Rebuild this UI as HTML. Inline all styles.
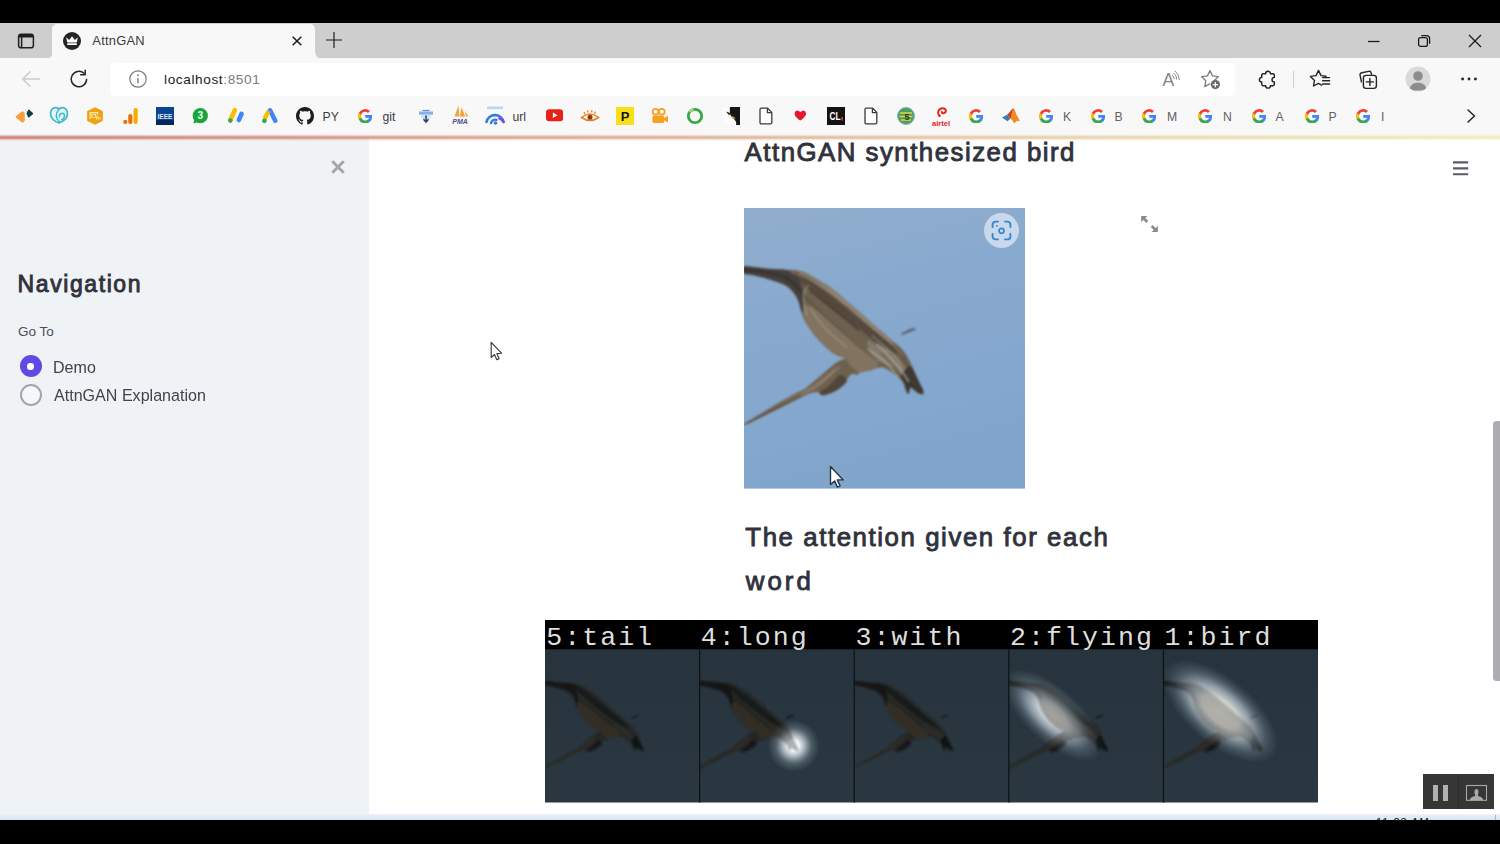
<!DOCTYPE html>
<html lang="en">
<head>
<meta charset="utf-8">
<title>AttnGAN</title>
<style>
*{box-sizing:border-box;margin:0;padding:0}
html,body{width:1500px;height:844px;overflow:hidden;background:#000;font-family:"Liberation Sans",sans-serif;}
#root{position:relative;width:1500px;height:844px;overflow:hidden;background:#000}
.abs{position:absolute}
#tabbar{left:0;top:23px;width:1500px;height:35px;background:#cecece}
#tab{left:52px;top:24.2px;width:263px;height:34px;background:#f8f8f8;border-radius:5px 5px 0 0}
.cnl{left:46.5px;top:52.5px;width:5.5px;height:5.5px;background:radial-gradient(circle at 0 0,#cecece 5px,#f8f8f8 5.8px)}
.cnr{left:315px;top:52.5px;width:5.5px;height:5.5px;background:radial-gradient(circle at 100% 0,#cecece 5px,#f8f8f8 5.8px)}
#toolbar{left:0;top:58px;width:1500px;height:79px;background:#f8f8f8}
#addr{left:110px;top:63px;width:1125px;height:33px;background:#fff;border-radius:5px}
#page{left:0;top:137px;width:1500px;height:683px;background:#fff;overflow:hidden}
#deco{left:-6px;top:135.8px;width:1512px;height:3.6px;background:linear-gradient(90deg,#c96a60 0%,#d58a76 25%,#dcab88 50%,#e6cf9e 75%,#ecebb2 100%);filter:blur(.8px)}
#sidebar{left:0;top:137px;width:369px;height:677px;background:#eff3f6}
#bottomstrip{left:0;top:813.6px;width:1500px;height:6.4px;background:linear-gradient(180deg,#edf3f9 0,#e2ebf6 40%,#d9e4f3 100%);overflow:hidden}
#blackbot{left:0;top:820px;width:1500px;height:24px;background:#000}
.t{position:absolute;white-space:nowrap;line-height:1}
.h{font-weight:normal;color:#30323d;-webkit-text-stroke:.9px #30323d;transform-origin:0 0}
.lbl{font-size:17.200px;color:#41434d;transform-origin:0 0}
.bm{font-size:12.2px;color:#626262;margin-top:1.5px}
</style>
</head>
<body>
<div id="root">
  <div class="abs" id="tabbar"></div>
  <div class="abs" id="tab"></div>
  <div class="abs cnl"></div><div class="abs cnr"></div>
  <div class="abs" id="toolbar"></div>
  <div class="abs" id="addr"></div>

  <!-- tab strip icons -->
  <svg class="abs" style="left:17px;top:32px" width="18" height="18" viewBox="0 0 18 18"><rect x="1.6" y="2.2" width="14.8" height="13.6" rx="2.6" fill="none" stroke="#1f1f1f" stroke-width="1.5"/><path d="M2 5.6V4.6a2.4 2.4 0 0 1 2.4-2.4h9.2A2.4 2.4 0 0 1 16 4.6v1z" fill="#1f1f1f"/><path d="M4.6 5v10.6" stroke="#1f1f1f" stroke-width="1.5"/></svg>
  <svg class="abs" style="left:63.4px;top:31.8px" width="18" height="18" viewBox="0 0 18 18"><circle cx="9" cy="9" r="9" fill="#242426"/><path d="M3.200 5.300l2.900 2.600L9 4.300l2.900 3.600 2.900-2.600-1 5.300H4.200z" fill="#fff"/><rect x="4.200" y="11.300" width="9.600" height="1.700" rx=".5" fill="#fff"/></svg>
  <div class="t" id="tabtitle" style="left:92.3px;top:34.6px;font-size:12.9px;letter-spacing:.25px;color:#3b3b3b">AttnGAN</div>
  <svg class="abs" style="left:291px;top:35px" width="12" height="12" viewBox="0 0 12 12"><path d="M1.7 1.7l8.600 8.600M10.300 1.700l-8.600 8.600" stroke="#1b1b1b" stroke-width="1.500" fill="none"/></svg>
  <svg class="abs" style="left:326.4px;top:32.1px" width="16" height="16" viewBox="0 0 16 16"><path d="M8 0v16M0 8h16" stroke="#1b1b1b" stroke-width="1.150" fill="none"/></svg>
  <svg class="abs" style="left:1366px;top:33px" width="16" height="16" viewBox="0 0 16 16"><path d="M2 8.500h11.500" stroke="#1b1b1b" stroke-width="1.300"/></svg>
  <svg class="abs" style="left:1416px;top:33px" width="16" height="16" viewBox="0 0 16 16"><rect x="2.600" y="4.600" width="8.800" height="8.800" rx="2" fill="none" stroke="#1b1b1b" stroke-width="1.300"/><path d="M5.200 2.600h5.600a2.800 2.800 0 0 1 2.800 2.800v5.400" fill="none" stroke="#1b1b1b" stroke-width="1.300"/></svg>
  <svg class="abs" style="left:1467px;top:33px" width="16" height="16" viewBox="0 0 16 16"><path d="M2 2l12 12M14 2L2 14" stroke="#1b1b1b" stroke-width="1.300" fill="none"/></svg>
  <!-- toolbar icons -->
  <svg class="abs" style="left:20px;top:69px" width="22" height="20" viewBox="0 0 22 20"><path d="M19.500 10H3M10 2.800L2.800 10l7.200 7.200" stroke="#cbcbcb" stroke-width="1.500" fill="none" stroke-linecap="round" stroke-linejoin="round"/></svg>
  <svg class="abs" style="left:69px;top:69px" width="20" height="20" viewBox="0 0 20 20"><path d="M17.600 10.400a7.700 7.700 0 1 1-2.600-6.100" stroke="#262626" stroke-width="1.500" fill="none" stroke-linecap="round"/><path d="M16.200 1.200v4.600h-4.600" stroke="#262626" stroke-width="1.500" fill="none" stroke-linecap="round" stroke-linejoin="round"/></svg>
  <svg class="abs" style="left:128px;top:69px" width="20" height="20" viewBox="0 0 20 20"><circle cx="10" cy="10" r="8.200" fill="none" stroke="#7a7a7a" stroke-width="1.200"/><path d="M10 9v5.200" stroke="#7a7a7a" stroke-width="1.400"/><circle cx="10" cy="6.300" r=".95" fill="#7a7a7a"/></svg>
  <div class="t" id="url" style="left:164px;top:73.3px;font-size:13.6px;letter-spacing:.62px;color:#202020">localhost<span style="color:#7b7b7b">:8501</span></div>

  <!-- right toolbar icons -->
  <div class="t" id="readA" style="left:1162.6px;top:71.7px;font-size:17.6px;color:#858585">A</div>
  <svg class="abs" style="left:1171px;top:70px" width="12" height="14" viewBox="0 0 12 14"><path d="M1.300 5.200q1.700 1.300 1.800 3.600M2.800 3.200q2.800 2.200 3 6M4.300 1.200q3.800 3 4.100 8.400" stroke="#8a8a8a" stroke-width="1" fill="none" stroke-linecap="round"/></svg>
  <svg class="abs" style="left:1199px;top:68px" width="24" height="24" viewBox="0 0 24 24"><path d="M11 2.600l2.500 5.300 5.700.8-4.100 4.100.4 1.400M11 2.600L8.400 7.900l-5.700.8 4.100 4.100-1 5.800 5-2.700" stroke="#7d7d7d" stroke-width="1.300" fill="none" stroke-linejoin="round" stroke-linecap="round"/><circle cx="16.400" cy="16.600" r="4.600" fill="#6a6a6a"/><path d="M16.400 14v5.200M13.800 16.600h5.200" stroke="#fff" stroke-width="1.200"/></svg>
  <svg class="abs" style="left:1256.7px;top:68.9px" width="21" height="21" viewBox="0 0 20 20"><path d="M6 4.500h2.200a2.300 2.300 0 0 1 4.600 0h2.200a1.500 1.500 0 0 1 1.500 1.500v2a2.200 2.200 0 0 0 0 4.400v2a1.500 1.500 0 0 1-1.500 1.500h-2.200a2.300 2.300 0 0 1-4.600 0H6a1.500 1.500 0 0 1-1.500-1.500v-2a2.200 2.200 0 0 1 0-4.400V6A1.500 1.500 0 0 1 6 4.500z" stroke="#232323" stroke-width="1.380" fill="none" stroke-linejoin="round"/></svg>
  <div class="abs" style="left:1292.500px;top:71px;width:1px;height:17px;background:#cecece"></div>
  <svg class="abs" style="left:1309px;top:68px" width="24" height="22" viewBox="0 0 24 22"><path d="M9.500 2.400l2.500 5.200 5 .7M9.500 2.400L7 7.600l-5.600.8 4.100 4-1 5.600 5-2.600 3.200 1.700" stroke="#262626" stroke-width="1.400" fill="none" stroke-linejoin="round" stroke-linecap="round"/><path d="M13.600 9.600h7M13.600 12.800h7M13.600 16h7" stroke="#262626" stroke-width="1.400" stroke-linecap="round"/></svg>
  <svg class="abs" style="left:1357px;top:68px" width="24" height="24" viewBox="0 0 24 24"><path d="M4.400 13.800l-1.300-6.400a2.200 2.200 0 0 1 1.700-2.600l6.800-1.400a2.200 2.200 0 0 1 2.600 1.700l.3 1.300" stroke="#262626" stroke-width="1.400" fill="none" stroke-linecap="round"/><rect x="6.400" y="7.400" width="13" height="13" rx="2.600" fill="#f7f7f7" stroke="#262626" stroke-width="1.400"/><path d="M12.900 10.400v7M9.400 13.900h7" stroke="#262626" stroke-width="1.400" stroke-linecap="round"/></svg>
  <svg class="abs" style="left:1405px;top:66px" width="26" height="26" viewBox="0 0 26 26"><defs><clipPath id="pc"><circle cx="13" cy="13" r="12.500"/></clipPath></defs><circle cx="13" cy="13" r="12.500" fill="#d9d9d9"/><g clip-path="url(#pc)" fill="#8d8d8d"><circle cx="13" cy="10" r="4.800"/><path d="M4.500 24.500c0-5.200 3.600-7.800 8.500-7.800s8.500 2.600 8.500 7.800z"/></g></svg>
  <svg class="abs" style="left:1458px;top:75px" width="22" height="8" viewBox="0 0 22 8"><circle cx="4.600" cy="4" r="1.450" fill="#262626"/><circle cx="11" cy="4" r="1.450" fill="#262626"/><circle cx="17.400" cy="4" r="1.450" fill="#262626"/></svg>

  <!-- bookmarks bar -->
  <svg class="abs" style="left:14.0px;top:106.7px" width="20" height="18" viewBox="0 0 20 18"><path d="M2.400 9.800l6.100-4.800 1.500 1.200v7.200l-1.500 1.400z" fill="#f5a040" stroke="#f5a040" stroke-width="1.600" stroke-linejoin="round"/><path d="M13.200 6.500l1.600-3.200 3.600 3.300-3.600 3.200z" fill="#0f3d45" stroke="#0f3d45" stroke-width="1.500" stroke-linejoin="round"/></svg>
  <svg class="abs" style="left:49.200px;top:106.400px" width="20" height="18.500" viewBox="0 0 20 18.500"><path d="M10 16.800C5 15.600 1.300 11.600 1.500 7.200 1.700 3.600 4.300 1.400 7 1.600c1.300.1 2.300.7 3 1.700.7-1 1.700-1.600 3-1.700 2.700-.2 5.300 2 5.500 5.600.2 4.400-3.500 8.400-8.500 9.600z" fill="#e6f7f9" stroke="#3cb8c8" stroke-width="1.700" stroke-linejoin="round"/><path d="M10.600 15.800C6.500 12.600 6 7.600 9.800 3.600M10.500 10.800c-.6-2.600 2.600-4.800 4.400-2.800 1.500 1.700.2 4.800-2.400 6" fill="none" stroke="#3cb8c8" stroke-width="1.500" stroke-linecap="round"/></svg>
  <svg class="abs" style="left:84.500px;top:105.500px" width="20" height="20" viewBox="0 0 20 20"><path d="M10 1.200l7.200 3.600a1.200 1.200 0 0 1 .7 1.100v8.200a1.200 1.200 0 0 1-.7 1.100L10 18.800l-7.200-3.600a1.200 1.200 0 0 1-.7-1.100V5.900a1.200 1.200 0 0 1 .7-1.100z" fill="#efa112"/><path d="M5.200 12.800V6.600h7.400v2" fill="none" stroke="#fbe7a6" stroke-width="1.300"/><rect x="6.800" y="8.300" width="3.800" height="3" fill="none" stroke="#fbe7a6" stroke-width="1"/><path d="M11.600 13.600v-3.800M13.400 13.600v-3M15.200 13.600v-2" stroke="#fbe7a6" stroke-width="1.200"/></svg>
  <svg class="abs" style="left:121.5px;top:106.7px" width="18" height="18" viewBox="0 0 18 18"><rect x="11.500" y="1" width="4.200" height="16" rx="2.100" fill="#f9ab00"/><rect x="6.200" y="7" width="4.200" height="10" rx="2.100" fill="#e8710a"/><circle cx="3.300" cy="14.900" r="2.100" fill="#e8710a"/></svg>
  <svg class="abs" style="left:155.7px;top:106.7px" width="18" height="18" viewBox="0 0 18 18"><rect width="18" height="18" fill="#0a4595"/><rect y="13" width="18" height="5" fill="#06275c"/><text x="9" y="11.500" font-family="Liberation Sans, sans-serif" font-weight="bold" font-size="7.500" fill="#dfe8f5" text-anchor="middle" textLength="15" lengthAdjust="spacingAndGlyphs">IEEE</text></svg>
  <svg class="abs" style="left:191.0px;top:106.7px" width="18" height="18" viewBox="0 0 18 18"><circle cx="9.300" cy="8.700" r="7.600" fill="#18a53c"/><path d="M2.200 16.600l1.400-4.600 3.600 3z" fill="#18a53c"/><text x="9.300" y="12.300" font-family="Liberation Sans, sans-serif" font-weight="bold" font-size="10" fill="#e9ffe9" text-anchor="middle">3</text></svg>
  <svg class="abs" style="left:225.6px;top:106.7px" width="20" height="18" viewBox="0 0 20 18"><path d="M8.800 3.200L4.300 13" stroke="#fbbc04" stroke-width="4.600" stroke-linecap="round"/><path d="M15.600 6.800L12.800 13" stroke="#4285f4" stroke-width="4.600" stroke-linecap="round"/><circle cx="4.300" cy="13.600" r="2.300" fill="#34a853"/></svg>
  <svg class="abs" style="left:259.8px;top:106.7px" width="20" height="18" viewBox="0 0 20 18"><path d="M10 3.300l5.300 10.400" stroke="#4285f4" stroke-width="4.600" stroke-linecap="round"/><path d="M8.600 4L4.500 12" stroke="#fbbc04" stroke-width="4.400" stroke-linecap="butt"/><circle cx="4.400" cy="13.800" r="2.400" fill="#34a853"/></svg>
  <svg class="abs" style="left:296.3px;top:106.7px" width="18" height="18" viewBox="0 0 18 18"><path transform="scale(1.125)" d="M8 0C3.580 0 0 3.580 0 8c0 3.540 2.290 6.530 5.470 7.590.4.070.55-.170.550-.380 0-.190-.010-.820-.010-1.490-2.010.370-2.530-.490-2.690-.940-.090-.230-.480-.940-.820-1.130-.280-.150-.680-.520-.010-.530.630-.010 1.080.580 1.230.820.720 1.210 1.870.870 2.330.660.070-.520.280-.870.510-1.070-1.780-.2-3.640-.890-3.640-3.950 0-.870.310-1.590.820-2.150-.080-.2-.360-1.020.080-2.120 0 0 .670-.210 2.200.820.640-.180 1.320-.270 2-.270s1.360.090 2 .270c1.530-1.040 2.200-.820 2.200-.820.440 1.100.160 1.920.080 2.120.510.560.820 1.270.820 2.150 0 3.070-1.870 3.750-3.650 3.950.290.250.540.730.540 1.480 0 1.070-.010 1.930-.010 2.200 0 .210.150.460.550.380A8.010 8.010 0 0 0 16 8c0-4.420-3.580-8-8-8z" fill="#1b1f23"/></svg>
  <svg class="abs" style="left:357.6px;top:108.5px" width="14.4" height="14.4" viewBox="0 0 16 16"><path d="M15.680 8.180c0-.570-.050-1.110-.150-1.640H8v3.100h4.300a3.680 3.680 0 0 1-1.600 2.410v2h2.590c1.510-1.390 2.390-3.440 2.390-5.870z" fill="#4285f4"/><path d="M8 16c2.160 0 3.970-.720 5.290-1.940l-2.590-2c-.710.480-1.630.770-2.700.770-2.080 0-3.850-1.410-4.480-3.300H.85v2.070A8 8 0 0 0 8 16z" fill="#34a853"/><path d="M3.520 9.530a4.800 4.800 0 0 1 0-3.060V4.400H.85a8 8 0 0 0 0 7.200z" fill="#fbbc05"/><path d="M8 3.180c1.170 0 2.230.4 3.060 1.200l2.290-2.290A8 8 0 0 0 .85 4.400l2.670 2.070C4.150 4.580 5.920 3.180 8 3.180z" fill="#ea4335"/></svg>
  <svg class="abs" style="left:416.7px;top:106.7px" width="18" height="18" viewBox="0 0 18 18"><rect x="2" y="4.500" width="14" height="3.200" fill="#7fb2e6"/><path d="M4 7.700h10l-1 4.300H5z" fill="#cfe1f5"/><path d="M9 8.500v6M6.500 12.200l2.500 3 2.500-3" stroke="#2a3f6a" stroke-width="1.500" fill="none"/><path d="M5.500 3.500h7" stroke="#5c8fd0" stroke-width="1.200"/></svg>
  <svg class="abs" style="left:449.0px;top:103.7px" width="22" height="22" viewBox="0 0 22 22"><path d="M5.500 12.500L9.500 1.500l.8 11zM10.800 12.500l1.700-9 3.800 9zM17 12.500l-1.200-6 3.600 6z" fill="#f4a13a"/><text x="11" y="20" font-family="Liberation Sans, sans-serif" font-weight="bold" font-style="italic" font-size="7" fill="#4a4f8c" text-anchor="middle">PMA</text></svg>
  <svg class="abs" style="left:484.4px;top:104.7px" width="22" height="22" viewBox="0 0 22 22"><rect x="3" y="1.500" width="16" height="2.600" fill="#bcd4ee"/><path d="M2.500 17a8.700 8.700 0 0 1 17 0" stroke="#2f7de1" stroke-width="2.600" fill="none" stroke-linecap="round"/><path d="M15.500 13.200a8.700 8.700 0 0 1 4 3.800" stroke="#7d4fe0" stroke-width="2.600" fill="none" stroke-linecap="round"/><path d="M7 18a4.500 4.500 0 0 1 5.500-3.200" stroke="#2f7de1" stroke-width="2.400" fill="none" stroke-linecap="round"/><circle cx="11.500" cy="18" r="1.800" fill="#2f7de1"/></svg>
  <svg class="abs" style="left:545.8px;top:109.4px" width="17.2" height="12.6" viewBox="0 0 20 14"><rect width="20" height="14" rx="3.800" fill="#e62117"/><path d="M8 3.800l5.400 3.200L8 10.200z" fill="#fff"/></svg>
  <svg class="abs" style="left:580.0px;top:106.7px" width="20" height="18" viewBox="0 0 20 18"><path d="M1.500 10.500Q10 3.500 18.500 10.500Q10 16.500 1.500 10.500z" fill="none" stroke="#e9801d" stroke-width="1.600"/><circle cx="10" cy="10.300" r="2.500" fill="#8a3a10"/><path d="M4 5l1 2M7.500 3.300l.6 2.200M12 3.200l-.4 2.200M15.500 4.600l-1 2" stroke="#e9801d" stroke-width="1.300"/></svg>
  <svg class="abs" style="left:615.6px;top:106.7px" width="18" height="18" viewBox="0 0 18 18"><rect width="18" height="18" fill="#f7e018"/><text x="9.200" y="13.600" font-family="Liberation Sans, sans-serif" font-weight="bold" font-size="13" fill="#141414" text-anchor="middle">P</text></svg>
  <svg class="abs" style="left:650.0px;top:106.7px" width="20" height="18" viewBox="0 0 20 18"><circle cx="5.500" cy="4.800" r="2.900" fill="none" stroke="#f5a020" stroke-width="1.700"/><circle cx="11.800" cy="4.800" r="2.900" fill="none" stroke="#f5a020" stroke-width="1.700"/><rect x="2.500" y="8.500" width="11.500" height="7.500" rx="1.200" fill="#f5a020"/><path d="M14 11l4-2.200v6.800L14 13.500z" fill="#f5a020"/></svg>
  <svg class="abs" style="left:686.0px;top:106.7px" width="18" height="18" viewBox="0 0 18 18"><circle cx="9" cy="9" r="6.700" fill="none" stroke="#3aa845" stroke-width="2.800"/><path d="M3.500 5a6.700 6.700 0 0 1 4-2.500" stroke="#9bd88f" stroke-width="2.800" fill="none"/></svg>
  <svg class="abs" style="left:723.0px;top:105.7px" width="18" height="20" viewBox="0 0 18 20"><rect x="0" y="1" width="18" height="18" fill="#fbfbfb"/><path d="M7 1h10v18h-4c1-3-1-5.500-4-7.500C7 10 6.500 5 7 1z" fill="#161616"/><path d="M3 5.500l5 1.800-2 2z" fill="#222"/><path d="M8 9.500l5 2.800-3.600.2z" fill="#e8a93a"/></svg>
  <svg class="abs" style="left:757.8px;top:106.7px" width="16" height="18" viewBox="0 0 16 18"><path d="M3.200 1.200h6.400l4.200 4.200v10.200a1.200 1.200 0 0 1-1.200 1.200H3.200A1.200 1.200 0 0 1 2 15.600V2.400a1.200 1.200 0 0 1 1.200-1.200z" fill="#fff" stroke="#3a3a3a" stroke-width="1.300" stroke-linejoin="round"/><path d="M9.400 1.400v4.200h4.200" fill="none" stroke="#3a3a3a" stroke-width="1.300" stroke-linejoin="round"/></svg>
  <svg class="abs" style="left:794.0px;top:110.4px" width="12.6" height="11" viewBox="0 0 16 14"><path d="M8 13.500C2 9 .5 6.200.8 4 1.100 1.800 3 .6 4.800.8 6.200 1 7.300 1.900 8 3c.7-1.100 1.800-2 3.200-2.200 1.800-.2 3.700 1 4 3.200.3 2.200-1.200 5-7.200 9.500z" fill="#e5182b"/></svg>
  <svg class="abs" style="left:826.8px;top:106.7px" width="18" height="18" viewBox="0 0 18 18"><rect width="18" height="18" fill="#121212"/><text x="8" y="13.300" font-family="Liberation Sans, sans-serif" font-weight="bold" font-size="10.500" fill="#fff" text-anchor="middle" textLength="11" lengthAdjust="spacingAndGlyphs">CL</text><rect x="14.300" y="10" width="1.600" height="3.500" fill="#e03a3a"/></svg>
  <svg class="abs" style="left:863.2px;top:106.7px" width="16" height="18" viewBox="0 0 16 18"><path d="M3.200 1.200h6.400l4.200 4.200v10.200a1.200 1.200 0 0 1-1.200 1.200H3.200A1.200 1.200 0 0 1 2 15.600V2.400a1.200 1.200 0 0 1 1.200-1.200z" fill="#fff" stroke="#3a3a3a" stroke-width="1.300" stroke-linejoin="round"/><path d="M9.400 1.400v4.200h4.200" fill="none" stroke="#3a3a3a" stroke-width="1.300" stroke-linejoin="round"/></svg>
  <svg class="abs" style="left:897.0px;top:106.7px" width="18" height="18" viewBox="0 0 18 18"><circle cx="9" cy="9" r="8.500" fill="#4f9e5a"/><circle cx="9" cy="9" r="8.500" fill="none" stroke="#79b8c9" stroke-width="1"/><path d="M3 6h12M2.500 9.500h13M4 13h10" stroke="#e6d24a" stroke-width="1.700"/><text x="10" y="13" font-family="Liberation Sans, sans-serif" font-weight="bold" font-size="9" fill="#2a3a2a" text-anchor="middle">5</text></svg>
  <svg class="abs" style="left:930.4px;top:104.7px" width="22" height="22" viewBox="0 0 22 22"><path d="M8.500 9.500c-1.500-3 1-6.500 4.500-6.300 2.800.2 3.800 3 1.800 4.600-1.300 1-3 .5-3-.8" fill="none" stroke="#e2231a" stroke-width="2" stroke-linecap="round"/><circle cx="9.500" cy="10.800" r="1.300" fill="#e2231a"/><text x="11" y="20.500" font-family="Liberation Sans, sans-serif" font-weight="bold" font-size="7.600" fill="#e2231a" text-anchor="middle">airtel</text></svg>
  <svg class="abs" style="left:968.8px;top:108.5px" width="14.4" height="14.4" viewBox="0 0 16 16"><path d="M15.680 8.180c0-.570-.050-1.110-.150-1.640H8v3.100h4.300a3.680 3.680 0 0 1-1.600 2.410v2h2.590c1.510-1.390 2.390-3.440 2.390-5.870z" fill="#4285f4"/><path d="M8 16c2.160 0 3.970-.720 5.290-1.940l-2.590-2c-.710.480-1.630.770-2.700.770-2.080 0-3.850-1.410-4.480-3.300H.85v2.070A8 8 0 0 0 8 16z" fill="#34a853"/><path d="M3.520 9.530a4.800 4.800 0 0 1 0-3.060V4.400H.85a8 8 0 0 0 0 7.200z" fill="#fbbc05"/><path d="M8 3.180c1.170 0 2.230.4 3.060 1.200l2.290-2.290A8 8 0 0 0 .85 4.400l2.670 2.070C4.150 4.580 5.920 3.180 8 3.180z" fill="#ea4335"/></svg>
  <svg class="abs" style="left:1001.0px;top:106.7px" width="20" height="18" viewBox="0 0 20 18"><path d="M1 10.500l5-2.800 3.500 3.800-3 2.700z" fill="#3b78b5"/><path d="M6 7.700c2.500-1.500 4-5 6-6.500 1 .5 1.500 2 2.500 5l-5 5.300z" fill="#c9421f"/><path d="M12 1.200c1.500 1 3.500 7 7 13-2.500-1.200-3.800-.4-5.500 2.300-1.200-1.800-2.500-3.800-4-5z" fill="#f08a24"/></svg>
  <svg class="abs" style="left:1038.8px;top:108.5px" width="14.4" height="14.4" viewBox="0 0 16 16"><path d="M15.680 8.180c0-.570-.050-1.110-.150-1.640H8v3.100h4.300a3.680 3.680 0 0 1-1.600 2.410v2h2.590c1.510-1.390 2.390-3.440 2.390-5.870z" fill="#4285f4"/><path d="M8 16c2.160 0 3.970-.720 5.290-1.940l-2.590-2c-.710.480-1.630.770-2.700.770-2.080 0-3.850-1.410-4.480-3.300H.85v2.070A8 8 0 0 0 8 16z" fill="#34a853"/><path d="M3.520 9.530a4.800 4.800 0 0 1 0-3.060V4.400H.85a8 8 0 0 0 0 7.200z" fill="#fbbc05"/><path d="M8 3.180c1.170 0 2.230.4 3.060 1.200l2.290-2.290A8 8 0 0 0 .85 4.400l2.670 2.070C4.150 4.580 5.920 3.180 8 3.180z" fill="#ea4335"/></svg>
  <svg class="abs" style="left:1090.5px;top:108.5px" width="14.4" height="14.4" viewBox="0 0 16 16"><path d="M15.680 8.180c0-.570-.050-1.110-.150-1.640H8v3.100h4.300a3.680 3.680 0 0 1-1.600 2.410v2h2.590c1.510-1.390 2.390-3.440 2.390-5.870z" fill="#4285f4"/><path d="M8 16c2.160 0 3.970-.720 5.290-1.940l-2.590-2c-.710.480-1.630.770-2.700.770-2.080 0-3.850-1.410-4.480-3.300H.85v2.070A8 8 0 0 0 8 16z" fill="#34a853"/><path d="M3.520 9.530a4.800 4.800 0 0 1 0-3.060V4.400H.85a8 8 0 0 0 0 7.200z" fill="#fbbc05"/><path d="M8 3.180c1.170 0 2.230.4 3.060 1.200l2.290-2.290A8 8 0 0 0 .85 4.400l2.670 2.070C4.150 4.580 5.920 3.180 8 3.180z" fill="#ea4335"/></svg>
  <svg class="abs" style="left:1141.8px;top:108.5px" width="14.4" height="14.4" viewBox="0 0 16 16"><path d="M15.680 8.180c0-.570-.050-1.110-.150-1.640H8v3.100h4.300a3.680 3.680 0 0 1-1.600 2.410v2h2.590c1.510-1.390 2.390-3.440 2.390-5.870z" fill="#4285f4"/><path d="M8 16c2.160 0 3.970-.720 5.290-1.940l-2.590-2c-.710.480-1.630.770-2.700.770-2.080 0-3.850-1.410-4.480-3.300H.85v2.070A8 8 0 0 0 8 16z" fill="#34a853"/><path d="M3.520 9.530a4.800 4.800 0 0 1 0-3.060V4.400H.85a8 8 0 0 0 0 7.200z" fill="#fbbc05"/><path d="M8 3.180c1.170 0 2.230.4 3.060 1.200l2.290-2.290A8 8 0 0 0 .85 4.400l2.670 2.070C4.150 4.580 5.920 3.180 8 3.180z" fill="#ea4335"/></svg>
  <svg class="abs" style="left:1197.8px;top:108.5px" width="14.4" height="14.4" viewBox="0 0 16 16"><path d="M15.680 8.180c0-.570-.050-1.110-.150-1.640H8v3.100h4.300a3.680 3.680 0 0 1-1.600 2.410v2h2.590c1.510-1.390 2.390-3.440 2.390-5.870z" fill="#4285f4"/><path d="M8 16c2.160 0 3.970-.720 5.290-1.940l-2.590-2c-.710.480-1.630.770-2.700.770-2.080 0-3.850-1.410-4.480-3.300H.85v2.070A8 8 0 0 0 8 16z" fill="#34a853"/><path d="M3.520 9.530a4.800 4.800 0 0 1 0-3.060V4.400H.85a8 8 0 0 0 0 7.200z" fill="#fbbc05"/><path d="M8 3.180c1.170 0 2.230.4 3.060 1.200l2.290-2.290A8 8 0 0 0 .85 4.400l2.670 2.070C4.150 4.580 5.920 3.180 8 3.180z" fill="#ea4335"/></svg>
  <svg class="abs" style="left:1251.8px;top:108.5px" width="14.4" height="14.4" viewBox="0 0 16 16"><path d="M15.680 8.180c0-.570-.050-1.110-.150-1.640H8v3.100h4.300a3.680 3.680 0 0 1-1.600 2.410v2h2.590c1.510-1.390 2.390-3.440 2.390-5.870z" fill="#4285f4"/><path d="M8 16c2.160 0 3.970-.720 5.290-1.940l-2.590-2c-.710.480-1.630.770-2.700.770-2.080 0-3.850-1.410-4.480-3.300H.85v2.070A8 8 0 0 0 8 16z" fill="#34a853"/><path d="M3.520 9.530a4.800 4.800 0 0 1 0-3.060V4.400H.85a8 8 0 0 0 0 7.200z" fill="#fbbc05"/><path d="M8 3.180c1.170 0 2.230.4 3.060 1.200l2.290-2.290A8 8 0 0 0 .85 4.400l2.670 2.070C4.150 4.580 5.920 3.180 8 3.180z" fill="#ea4335"/></svg>
  <svg class="abs" style="left:1304.8px;top:108.5px" width="14.4" height="14.4" viewBox="0 0 16 16"><path d="M15.680 8.180c0-.570-.050-1.110-.150-1.640H8v3.100h4.300a3.680 3.680 0 0 1-1.600 2.410v2h2.590c1.510-1.390 2.390-3.440 2.390-5.870z" fill="#4285f4"/><path d="M8 16c2.160 0 3.970-.720 5.290-1.940l-2.590-2c-.710.480-1.630.770-2.700.770-2.080 0-3.850-1.410-4.480-3.300H.85v2.070A8 8 0 0 0 8 16z" fill="#34a853"/><path d="M3.520 9.530a4.800 4.800 0 0 1 0-3.060V4.400H.85a8 8 0 0 0 0 7.200z" fill="#fbbc05"/><path d="M8 3.180c1.170 0 2.230.4 3.060 1.200l2.290-2.290A8 8 0 0 0 .85 4.400l2.670 2.070C4.150 4.580 5.920 3.180 8 3.180z" fill="#ea4335"/></svg>
  <svg class="abs" style="left:1355.8px;top:108.5px" width="14.4" height="14.4" viewBox="0 0 16 16"><path d="M15.680 8.180c0-.570-.050-1.110-.150-1.640H8v3.100h4.300a3.680 3.680 0 0 1-1.600 2.410v2h2.590c1.510-1.390 2.390-3.440 2.390-5.870z" fill="#4285f4"/><path d="M8 16c2.160 0 3.970-.720 5.290-1.940l-2.590-2c-.710.480-1.630.770-2.700.770-2.080 0-3.850-1.410-4.480-3.300H.85v2.070A8 8 0 0 0 8 16z" fill="#34a853"/><path d="M3.520 9.530a4.800 4.800 0 0 1 0-3.060V4.400H.85a8 8 0 0 0 0 7.200z" fill="#fbbc05"/><path d="M8 3.180c1.170 0 2.230.4 3.060 1.200l2.290-2.290A8 8 0 0 0 .85 4.400l2.670 2.070C4.150 4.580 5.920 3.180 8 3.180z" fill="#ea4335"/></svg>
  <svg class="abs" style="left:1465.0px;top:107.7px" width="12" height="16" viewBox="0 0 12 16"><path d="M3 2l6.500 6L3 14" stroke="#262626" stroke-width="1.500" fill="none" stroke-linecap="round" stroke-linejoin="round"/></svg>
  <div class="t bm" style="left:322.5px;top:109px;color:#3c3c3c">PY</div>
  <div class="t bm" style="left:382.5px;top:109px;color:#3c3c3c">git</div>
  <div class="t bm" style="left:512.5px;top:109px;color:#3c3c3c">url</div>
  <div class="t bm" style="left:1063px;top:109px">K</div>
  <div class="t bm" style="left:1114.5px;top:109px">B</div>
  <div class="t bm" style="left:1167px;top:109px">M</div>
  <div class="t bm" style="left:1223px;top:109px">N</div>
  <div class="t bm" style="left:1275.5px;top:109px">A</div>
  <div class="t bm" style="left:1328.5px;top:109px">P</div>
  <div class="t bm" style="left:1381px;top:109px">I</div>
  <div class="abs" id="page"></div>
  <div class="abs" id="sidebar"></div>

  <!-- page content -->
  <div class="t h" id="h1" style="left:744.6px;top:139.7px;font-size:25.8px;letter-spacing:1.5px">AttnGAN synthesized bird</div>
  <div class="t h" id="h2a" style="left:745.3px;top:525.1px;font-size:25.8px;letter-spacing:1.58px">The attention given for each</div>
  <div class="t h" id="h2b" style="left:745.7px;top:568.8px;font-size:25.8px;letter-spacing:3.1px">word</div>
  <!-- IMG-START -->
  <svg class="abs" style="left:743.6px;top:208.3px" width="281.2" height="280.6" viewBox="18.8 -241.5 1318 1315.5" preserveAspectRatio="none">
<defs>
<linearGradient id="sky" x1="0" y1="0" x2=".25" y2="1"><stop offset="0" stop-color="#91adcc"/><stop offset=".35" stop-color="#89aacf"/><stop offset=".8" stop-color="#84a7cd"/><stop offset="1" stop-color="#80a4ca"/></linearGradient>
<filter id="bb" x="-5%" y="-5%" width="110%" height="110%"><feGaussianBlur stdDeviation="4"/></filter>
</defs>
<rect x="18.8" y="-241.5" width="1318" height="1315.5" fill="url(#sky)"/>
<g filter="url(#bb)" opacity="1"><path d="M19,33C29,28 58,36 80,38C102,40 127,43 150,45C173,47 200,47 220,48C240,49 255,50 270,52C285,54 297,56 310,62C323,68 335,76 350,85C365,94 383,104 400,115C417,126 433,137 450,150C467,163 482,179 500,195C518,211 540,228 560,245C580,262 600,282 620,300C640,318 663,336 680,350C697,364 708,375 720,385C732,395 741,401 750,410C759,419 767,428 775,440C783,452 792,470 800,485C808,500 813,515 820,530C827,545 834,562 840,575C846,588 854,601 857,610C860,619 861,627 858,630C855,633 846,630 840,628C834,626 827,620 820,615C813,610 805,598 800,600C795,602 794,628 790,630C786,632 781,620 778,612C775,604 775,594 770,585C765,576 758,568 750,560C742,552 730,542 720,535C710,528 699,520 690,515C681,510 673,506 665,505C657,504 649,508 640,510C631,512 620,518 610,520C600,522 588,523 580,525C572,527 565,527 560,530C555,533 553,541 548,542C543,543 536,534 530,535C524,536 516,543 510,550C504,557 502,567 495,575C488,583 479,592 470,600C461,608 450,615 440,620C430,625 419,629 410,632C401,635 392,638 385,636C378,634 378,624 370,622C362,620 352,622 340,625C328,628 315,633 300,640C285,647 267,657 250,665C233,673 217,682 200,690C183,698 167,707 150,715C133,723 115,732 100,740C85,748 72,754 60,760C48,766 31,775 25,776C19,777 16,773 22,768C28,763 45,754 60,745C75,736 93,725 110,715C127,705 143,695 160,685C177,675 193,664 210,655C227,646 245,636 260,628C275,620 288,617 300,610C312,603 320,593 330,585C340,577 349,569 360,560C371,551 383,540 395,530C407,520 418,509 430,500C442,491 455,481 465,475C475,469 491,466 490,462C489,458 470,456 460,452C450,448 440,442 430,435C420,428 410,419 400,410C390,401 379,390 370,380C361,370 353,361 345,350C337,339 328,327 320,315C312,303 305,292 300,280C295,268 291,256 288,245C285,234 283,225 280,215C277,205 274,194 270,185C266,176 260,167 253,158C246,149 239,140 231,133C223,126 214,121 203,116C192,111 179,107 165,102C151,97 137,93 120,88C103,83 82,78 65,74C48,70 27,73 19,66C11,59 9,38 19,33Z" fill="#6e6150"/><path d="M300,215C306,208 323,216 340,225C357,234 380,254 400,270C420,286 440,303 460,320C480,337 500,353 520,370C540,387 560,404 580,420C600,436 630,451 640,465C650,479 647,496 640,505C633,514 613,516 600,520C587,524 573,531 560,528C547,525 532,511 520,500C508,489 500,470 490,462C480,454 470,456 460,452C450,448 440,442 430,435C420,428 410,419 400,410C390,401 379,390 370,380C361,370 353,361 345,350C337,339 327,328 320,315C313,302 305,287 302,270C299,253 294,222 300,215Z" fill="#867861" opacity=".8"/><path d="M250,62C255,58 290,67 310,75C330,83 350,97 370,110C390,123 408,138 430,155C452,172 477,195 500,215C523,235 547,254 570,275C593,296 618,320 640,340C662,360 683,378 700,395C717,412 740,434 740,440C740,446 717,438 700,430C683,422 662,409 640,395C618,381 593,362 570,345C547,328 523,308 500,290C477,272 452,252 430,235C408,218 388,201 370,185C352,169 335,154 320,140C305,126 292,113 280,100C268,87 245,66 250,62Z" fill="#483f35" opacity=".7"/><path d="M270,52C275,51 297,56 310,62C323,68 335,76 350,85C365,94 383,104 400,115C417,126 433,137 450,150C467,163 482,179 500,195C518,211 540,228 560,245C580,262 600,282 620,300C640,318 663,336 680,350C697,364 717,379 720,385C723,391 713,392 700,385C687,378 662,357 640,340C618,323 593,304 570,285C547,266 523,244 500,225C477,206 452,187 430,170C408,153 388,138 370,125C352,112 335,100 320,90C305,80 288,74 280,68C272,62 265,53 270,52Z" fill="#a49887" opacity=".45"/><path d="M19,33C29,28 58,36 80,38C102,40 127,43 150,45C173,47 201,46 220,50C239,54 250,58 262,70C274,82 284,102 290,120C296,138 299,160 300,180C301,200 298,229 296,240C294,251 291,249 288,245C285,241 283,225 280,215C277,205 274,194 270,185C266,176 260,167 253,158C246,149 239,140 231,133C223,126 214,121 203,116C192,111 179,107 165,102C151,97 137,93 120,88C103,83 82,78 65,74C48,70 27,73 19,66C11,59 9,38 19,33Z" fill="#403c37" opacity=".9"/><path d="M60,750C68,744 93,732 110,722C127,712 143,702 160,692C177,682 193,671 210,662C227,653 245,643 260,636C275,629 287,625 300,618C313,611 327,602 340,592C353,582 367,571 380,560C393,549 408,535 420,525C432,515 447,499 450,500C453,501 448,518 440,530C432,542 413,558 400,570C387,582 373,596 360,605C347,614 335,618 320,625C305,632 288,637 270,645C252,653 230,662 210,672C190,682 168,693 150,703C132,713 115,721 100,730C85,739 69,754 62,757C55,760 52,756 60,750Z" fill="#867861" opacity=".7"/><path d="M470,540C478,540 496,553 500,560C504,567 500,573 495,580C490,587 479,595 470,602C461,609 450,615 440,620C430,625 419,629 410,632C401,635 392,637 385,636C378,635 368,629 370,624C372,619 390,612 400,605C410,598 422,588 430,580C438,572 443,565 450,558C457,551 462,540 470,540Z" fill="#483f35" opacity=".8"/><path d="M600,380C608,375 640,390 660,400C680,410 702,423 720,440C738,457 755,480 770,500C785,520 798,542 810,560C822,578 842,606 840,610C838,614 813,596 800,585C787,574 773,558 760,545C747,532 733,519 720,510C707,501 693,497 680,490C667,483 652,480 640,470C628,460 617,445 610,430C603,415 592,385 600,380Z" fill="#d8d3ca" opacity=".22"/><path d="M770,520C778,512 791,496 800,500C809,504 818,531 825,545C832,559 840,574 845,585C850,596 856,604 858,612C860,620 861,628 858,631C855,634 846,631 840,628C834,625 827,620 820,615C813,610 805,598 800,600C795,602 794,628 790,630C786,632 782,620 778,612C774,604 772,590 768,580C764,570 755,560 755,550C755,540 762,528 770,520Z" fill="#34302a" opacity=".85"/><path d="M330,150C345,161 388,190 420,215C452,240 487,272 520,300C553,328 590,360 620,385C650,410 687,439 700,450" fill="none" stroke="#483f35" stroke-width="10" stroke-linecap="round" opacity=".6"/><path d="M300,170C313,183 352,223 380,250C408,277 440,303 470,330C500,357 532,387 560,410C588,433 627,460 640,470" fill="none" stroke="#483f35" stroke-width="7" stroke-linecap="round" opacity=".6"/><path d="M420,140C437,154 487,196 520,225C553,254 590,288 620,315C650,342 677,362 700,385C723,408 750,439 760,450" fill="none" stroke="#a49887" stroke-width="6" stroke-linecap="round" opacity=".6"/><path d="M640,400C650,408 682,432 700,450C718,468 735,490 750,510C765,530 783,560 790,570" fill="none" stroke="#d8d3ca" stroke-width="7" stroke-linecap="round" opacity=".6"/><path d="M600,420C608,426 633,442 650,455C667,468 685,484 700,500C715,516 733,542 740,550" fill="none" stroke="#d8d3ca" stroke-width="5" stroke-linecap="round" opacity=".6"/><path d="M680,380C690,388 722,410 740,430C758,450 775,476 790,500C805,524 823,562 830,575" fill="none" stroke="#483f35" stroke-width="6" stroke-linecap="round" opacity=".6"/><path d="M700,440C708,450 735,480 750,500C765,520 778,542 790,560C802,578 815,598 820,605" fill="none" stroke="#34302a" stroke-width="6" stroke-linecap="round" opacity=".6"/><path d="M320,120C317,127 303,145 300,160C297,175 298,193 300,210C302,227 312,252 315,260" fill="none" stroke="#d8d3ca" stroke-width="4" stroke-linecap="round" opacity=".6"/><path d="M330,230C338,242 362,278 380,300C398,322 420,342 440,360C460,378 490,402 500,410" fill="none" stroke="#a49887" stroke-width="8" stroke-linecap="round" opacity=".6"/><path d="M620,360C630,368 662,392 680,410C698,428 716,447 730,465C744,483 759,511 765,520" fill="none" stroke="#d8d3ca" stroke-width="4" stroke-linecap="round" opacity=".6"/><path d="M660,440C668,447 691,465 705,480C719,495 733,513 745,530C757,547 770,572 775,580" fill="none" stroke="#483f35" stroke-width="5" stroke-linecap="round" opacity=".6"/><path d="M560,330C570,339 600,367 620,385C640,403 663,422 680,440C697,458 713,482 720,490" fill="none" stroke="#a49887" stroke-width="5" stroke-linecap="round" opacity=".6"/><path d="M240,60C255,66 300,80 330,95C360,110 392,130 420,150C448,170 487,204 500,215" fill="none" stroke="#a49887" stroke-width="5" stroke-linecap="round" opacity=".6"/><path d="M20,48C33,49 73,52 100,56C127,60 157,65 180,72C203,79 224,89 240,100C256,111 269,133 275,140" fill="none" stroke="#34302a" stroke-width="16" stroke-linecap="round" opacity=".6"/><path d="M40,765C53,758 93,736 120,722C147,708 173,694 200,680C227,666 267,647 280,640" fill="none" stroke="#34302a" stroke-width="5" stroke-linecap="round" opacity=".6"/><path d="M300,625C310,619 340,603 360,590C380,577 402,560 420,545C438,530 462,508 470,500" fill="none" stroke="#a49887" stroke-width="5" stroke-linecap="round" opacity=".6"/><path d="M757,348C762,344 780,334 790,330C800,326 813,321 818,321C823,321 825,325 821,328C817,331 805,335 795,339C785,343 767,352 761,353C755,354 752,352 757,348Z" fill="#34302a" opacity=".7"/></g>
</svg>
  <svg class="abs" style="left:544.5px;top:620.2px" width="773" height="182.5" viewBox="0 0 773 182.5">
<defs><linearGradient id="pbg" x1="0" y1="0" x2="0" y2="1"><stop offset="0" stop-color="#27333c"/><stop offset="1" stop-color="#2b3841"/></linearGradient><filter id="pb" x="-5%" y="-5%" width="110%" height="110%"><feGaussianBlur stdDeviation="7"/></filter>
<radialGradient id="g1"><stop offset="0" stop-color="#fff" stop-opacity="1"/><stop offset=".22" stop-color="#f6f9fc" stop-opacity=".97"/><stop offset=".45" stop-color="#cfdae2" stop-opacity=".7"/><stop offset=".7" stop-color="#9fb0bc" stop-opacity=".3"/><stop offset="1" stop-color="#8fa0ab" stop-opacity="0"/></radialGradient>
<radialGradient id="g2"><stop offset="0" stop-color="#dcdedc" stop-opacity=".95"/><stop offset=".3" stop-color="#d6dde2" stop-opacity=".88"/><stop offset=".52" stop-color="#c3d2de" stop-opacity=".6"/><stop offset=".75" stop-color="#9fb3c2" stop-opacity=".25"/><stop offset="1" stop-color="#8ca0ae" stop-opacity="0"/></radialGradient>
<radialGradient id="g3"><stop offset="0" stop-color="#e2ded3" stop-opacity=".98"/><stop offset=".32" stop-color="#dedfdc" stop-opacity=".92"/><stop offset=".55" stop-color="#cbd8e2" stop-opacity=".62"/><stop offset=".78" stop-color="#a3b6c4" stop-opacity=".25"/><stop offset="1" stop-color="#8ca0ae" stop-opacity="0"/></radialGradient>
</defs>
<rect width="773" height="182.5" fill="url(#pbg)"/>
<rect width="773" height="29.3" fill="#000"/>
<svg x="0.00" y="29.3" width="154.60" height="153.2" viewBox="18.8 -241.5 1318 1315.5" preserveAspectRatio="none">
<g filter="url(#pb)" opacity="1"><path d="M19,33C29,28 58,36 80,38C102,40 127,43 150,45C173,47 200,47 220,48C240,49 255,50 270,52C285,54 297,56 310,62C323,68 335,76 350,85C365,94 383,104 400,115C417,126 433,137 450,150C467,163 482,179 500,195C518,211 540,228 560,245C580,262 600,282 620,300C640,318 663,336 680,350C697,364 708,375 720,385C732,395 741,401 750,410C759,419 767,428 775,440C783,452 792,470 800,485C808,500 813,515 820,530C827,545 834,562 840,575C846,588 854,601 857,610C860,619 861,627 858,630C855,633 846,630 840,628C834,626 827,620 820,615C813,610 805,598 800,600C795,602 794,628 790,630C786,632 781,620 778,612C775,604 775,594 770,585C765,576 758,568 750,560C742,552 730,542 720,535C710,528 699,520 690,515C681,510 673,506 665,505C657,504 649,508 640,510C631,512 620,518 610,520C600,522 588,523 580,525C572,527 565,527 560,530C555,533 553,541 548,542C543,543 536,534 530,535C524,536 516,543 510,550C504,557 502,567 495,575C488,583 479,592 470,600C461,608 450,615 440,620C430,625 419,629 410,632C401,635 392,638 385,636C378,634 378,624 370,622C362,620 352,622 340,625C328,628 315,633 300,640C285,647 267,657 250,665C233,673 217,682 200,690C183,698 167,707 150,715C133,723 115,732 100,740C85,748 72,754 60,760C48,766 31,775 25,776C19,777 16,773 22,768C28,763 45,754 60,745C75,736 93,725 110,715C127,705 143,695 160,685C177,675 193,664 210,655C227,646 245,636 260,628C275,620 288,617 300,610C312,603 320,593 330,585C340,577 349,569 360,560C371,551 383,540 395,530C407,520 418,509 430,500C442,491 455,481 465,475C475,469 491,466 490,462C489,458 470,456 460,452C450,448 440,442 430,435C420,428 410,419 400,410C390,401 379,390 370,380C361,370 353,361 345,350C337,339 328,327 320,315C312,303 305,292 300,280C295,268 291,256 288,245C285,234 283,225 280,215C277,205 274,194 270,185C266,176 260,167 253,158C246,149 239,140 231,133C223,126 214,121 203,116C192,111 179,107 165,102C151,97 137,93 120,88C103,83 82,78 65,74C48,70 27,73 19,66C11,59 9,38 19,33Z" fill="#272521"/><path d="M300,215C306,208 323,216 340,225C357,234 380,254 400,270C420,286 440,303 460,320C480,337 500,353 520,370C540,387 560,404 580,420C600,436 630,451 640,465C650,479 647,496 640,505C633,514 613,516 600,520C587,524 573,531 560,528C547,525 532,511 520,500C508,489 500,470 490,462C480,454 470,456 460,452C450,448 440,442 430,435C420,428 410,419 400,410C390,401 379,390 370,380C361,370 353,361 345,350C337,339 327,328 320,315C313,302 305,287 302,270C299,253 294,222 300,215Z" fill="#35322a" opacity=".8"/><path d="M250,62C255,58 290,67 310,75C330,83 350,97 370,110C390,123 408,138 430,155C452,172 477,195 500,215C523,235 547,254 570,275C593,296 618,320 640,340C662,360 683,378 700,395C717,412 740,434 740,440C740,446 717,438 700,430C683,422 662,409 640,395C618,381 593,362 570,345C547,328 523,308 500,290C477,272 452,252 430,235C408,218 388,201 370,185C352,169 335,154 320,140C305,126 292,113 280,100C268,87 245,66 250,62Z" fill="#14171a" opacity=".7"/><path d="M270,52C275,51 297,56 310,62C323,68 335,76 350,85C365,94 383,104 400,115C417,126 433,137 450,150C467,163 482,179 500,195C518,211 540,228 560,245C580,262 600,282 620,300C640,318 663,336 680,350C697,364 717,379 720,385C723,391 713,392 700,385C687,378 662,357 640,340C618,323 593,304 570,285C547,266 523,244 500,225C477,206 452,187 430,170C408,153 388,138 370,125C352,112 335,100 320,90C305,80 288,74 280,68C272,62 265,53 270,52Z" fill="#2d2c28" opacity=".45"/><path d="M19,33C29,28 58,36 80,38C102,40 127,43 150,45C173,47 201,46 220,50C239,54 250,58 262,70C274,82 284,102 290,120C296,138 299,160 300,180C301,200 298,229 296,240C294,251 291,249 288,245C285,241 283,225 280,215C277,205 274,194 270,185C266,176 260,167 253,158C246,149 239,140 231,133C223,126 214,121 203,116C192,111 179,107 165,102C151,97 137,93 120,88C103,83 82,78 65,74C48,70 27,73 19,66C11,59 9,38 19,33Z" fill="#111518" opacity=".9"/><path d="M60,750C68,744 93,732 110,722C127,712 143,702 160,692C177,682 193,671 210,662C227,653 245,643 260,636C275,629 287,625 300,618C313,611 327,602 340,592C353,582 367,571 380,560C393,549 408,535 420,525C432,515 447,499 450,500C453,501 448,518 440,530C432,542 413,558 400,570C387,582 373,596 360,605C347,614 335,618 320,625C305,632 288,637 270,645C252,653 230,662 210,672C190,682 168,693 150,703C132,713 115,721 100,730C85,739 69,754 62,757C55,760 52,756 60,750Z" fill="#35322a" opacity=".7"/><path d="M470,540C478,540 496,553 500,560C504,567 500,573 495,580C490,587 479,595 470,602C461,609 450,615 440,620C430,625 419,629 410,632C401,635 392,637 385,636C378,635 368,629 370,624C372,619 390,612 400,605C410,598 422,588 430,580C438,572 443,565 450,558C457,551 462,540 470,540Z" fill="#14171a" opacity=".8"/><path d="M600,380C608,375 640,390 660,400C680,410 702,423 720,440C738,457 755,480 770,500C785,520 798,542 810,560C822,578 842,606 840,610C838,614 813,596 800,585C787,574 773,558 760,545C747,532 733,519 720,510C707,501 693,497 680,490C667,483 652,480 640,470C628,460 617,445 610,430C603,415 592,385 600,380Z" fill="#3b3a35" opacity=".22"/><path d="M770,520C778,512 791,496 800,500C809,504 818,531 825,545C832,559 840,574 845,585C850,596 856,604 858,612C860,620 861,628 858,631C855,634 846,631 840,628C834,625 827,620 820,615C813,610 805,598 800,600C795,602 794,628 790,630C786,632 782,620 778,612C774,604 772,590 768,580C764,570 755,560 755,550C755,540 762,528 770,520Z" fill="#0d1115" opacity=".85"/><path d="M757,348C762,344 780,334 790,330C800,326 813,321 818,321C823,321 825,325 821,328C817,331 805,335 795,339C785,343 767,352 761,353C755,354 752,352 757,348Z" fill="#0d1115" opacity=".7"/></g>
</svg>
<svg x="154.60" y="29.3" width="154.60" height="153.2" viewBox="18.8 -241.5 1318 1315.5" preserveAspectRatio="none">
<g filter="url(#pb)" opacity="1"><path d="M19,33C29,28 58,36 80,38C102,40 127,43 150,45C173,47 200,47 220,48C240,49 255,50 270,52C285,54 297,56 310,62C323,68 335,76 350,85C365,94 383,104 400,115C417,126 433,137 450,150C467,163 482,179 500,195C518,211 540,228 560,245C580,262 600,282 620,300C640,318 663,336 680,350C697,364 708,375 720,385C732,395 741,401 750,410C759,419 767,428 775,440C783,452 792,470 800,485C808,500 813,515 820,530C827,545 834,562 840,575C846,588 854,601 857,610C860,619 861,627 858,630C855,633 846,630 840,628C834,626 827,620 820,615C813,610 805,598 800,600C795,602 794,628 790,630C786,632 781,620 778,612C775,604 775,594 770,585C765,576 758,568 750,560C742,552 730,542 720,535C710,528 699,520 690,515C681,510 673,506 665,505C657,504 649,508 640,510C631,512 620,518 610,520C600,522 588,523 580,525C572,527 565,527 560,530C555,533 553,541 548,542C543,543 536,534 530,535C524,536 516,543 510,550C504,557 502,567 495,575C488,583 479,592 470,600C461,608 450,615 440,620C430,625 419,629 410,632C401,635 392,638 385,636C378,634 378,624 370,622C362,620 352,622 340,625C328,628 315,633 300,640C285,647 267,657 250,665C233,673 217,682 200,690C183,698 167,707 150,715C133,723 115,732 100,740C85,748 72,754 60,760C48,766 31,775 25,776C19,777 16,773 22,768C28,763 45,754 60,745C75,736 93,725 110,715C127,705 143,695 160,685C177,675 193,664 210,655C227,646 245,636 260,628C275,620 288,617 300,610C312,603 320,593 330,585C340,577 349,569 360,560C371,551 383,540 395,530C407,520 418,509 430,500C442,491 455,481 465,475C475,469 491,466 490,462C489,458 470,456 460,452C450,448 440,442 430,435C420,428 410,419 400,410C390,401 379,390 370,380C361,370 353,361 345,350C337,339 328,327 320,315C312,303 305,292 300,280C295,268 291,256 288,245C285,234 283,225 280,215C277,205 274,194 270,185C266,176 260,167 253,158C246,149 239,140 231,133C223,126 214,121 203,116C192,111 179,107 165,102C151,97 137,93 120,88C103,83 82,78 65,74C48,70 27,73 19,66C11,59 9,38 19,33Z" fill="#272521"/><path d="M300,215C306,208 323,216 340,225C357,234 380,254 400,270C420,286 440,303 460,320C480,337 500,353 520,370C540,387 560,404 580,420C600,436 630,451 640,465C650,479 647,496 640,505C633,514 613,516 600,520C587,524 573,531 560,528C547,525 532,511 520,500C508,489 500,470 490,462C480,454 470,456 460,452C450,448 440,442 430,435C420,428 410,419 400,410C390,401 379,390 370,380C361,370 353,361 345,350C337,339 327,328 320,315C313,302 305,287 302,270C299,253 294,222 300,215Z" fill="#35322a" opacity=".8"/><path d="M250,62C255,58 290,67 310,75C330,83 350,97 370,110C390,123 408,138 430,155C452,172 477,195 500,215C523,235 547,254 570,275C593,296 618,320 640,340C662,360 683,378 700,395C717,412 740,434 740,440C740,446 717,438 700,430C683,422 662,409 640,395C618,381 593,362 570,345C547,328 523,308 500,290C477,272 452,252 430,235C408,218 388,201 370,185C352,169 335,154 320,140C305,126 292,113 280,100C268,87 245,66 250,62Z" fill="#14171a" opacity=".7"/><path d="M270,52C275,51 297,56 310,62C323,68 335,76 350,85C365,94 383,104 400,115C417,126 433,137 450,150C467,163 482,179 500,195C518,211 540,228 560,245C580,262 600,282 620,300C640,318 663,336 680,350C697,364 717,379 720,385C723,391 713,392 700,385C687,378 662,357 640,340C618,323 593,304 570,285C547,266 523,244 500,225C477,206 452,187 430,170C408,153 388,138 370,125C352,112 335,100 320,90C305,80 288,74 280,68C272,62 265,53 270,52Z" fill="#2d2c28" opacity=".45"/><path d="M19,33C29,28 58,36 80,38C102,40 127,43 150,45C173,47 201,46 220,50C239,54 250,58 262,70C274,82 284,102 290,120C296,138 299,160 300,180C301,200 298,229 296,240C294,251 291,249 288,245C285,241 283,225 280,215C277,205 274,194 270,185C266,176 260,167 253,158C246,149 239,140 231,133C223,126 214,121 203,116C192,111 179,107 165,102C151,97 137,93 120,88C103,83 82,78 65,74C48,70 27,73 19,66C11,59 9,38 19,33Z" fill="#111518" opacity=".9"/><path d="M60,750C68,744 93,732 110,722C127,712 143,702 160,692C177,682 193,671 210,662C227,653 245,643 260,636C275,629 287,625 300,618C313,611 327,602 340,592C353,582 367,571 380,560C393,549 408,535 420,525C432,515 447,499 450,500C453,501 448,518 440,530C432,542 413,558 400,570C387,582 373,596 360,605C347,614 335,618 320,625C305,632 288,637 270,645C252,653 230,662 210,672C190,682 168,693 150,703C132,713 115,721 100,730C85,739 69,754 62,757C55,760 52,756 60,750Z" fill="#35322a" opacity=".7"/><path d="M470,540C478,540 496,553 500,560C504,567 500,573 495,580C490,587 479,595 470,602C461,609 450,615 440,620C430,625 419,629 410,632C401,635 392,637 385,636C378,635 368,629 370,624C372,619 390,612 400,605C410,598 422,588 430,580C438,572 443,565 450,558C457,551 462,540 470,540Z" fill="#14171a" opacity=".8"/><path d="M600,380C608,375 640,390 660,400C680,410 702,423 720,440C738,457 755,480 770,500C785,520 798,542 810,560C822,578 842,606 840,610C838,614 813,596 800,585C787,574 773,558 760,545C747,532 733,519 720,510C707,501 693,497 680,490C667,483 652,480 640,470C628,460 617,445 610,430C603,415 592,385 600,380Z" fill="#3b3a35" opacity=".22"/><path d="M770,520C778,512 791,496 800,500C809,504 818,531 825,545C832,559 840,574 845,585C850,596 856,604 858,612C860,620 861,628 858,631C855,634 846,631 840,628C834,625 827,620 820,615C813,610 805,598 800,600C795,602 794,628 790,630C786,632 782,620 778,612C774,604 772,590 768,580C764,570 755,560 755,550C755,540 762,528 770,520Z" fill="#0d1115" opacity=".85"/><path d="M757,348C762,344 780,334 790,330C800,326 813,321 818,321C823,321 825,325 821,328C817,331 805,335 795,339C785,343 767,352 761,353C755,354 752,352 757,348Z" fill="#0d1115" opacity=".7"/></g>
</svg>
<svg x="309.20" y="29.3" width="154.60" height="153.2" viewBox="18.8 -241.5 1318 1315.5" preserveAspectRatio="none">
<g filter="url(#pb)" opacity="1"><path d="M19,33C29,28 58,36 80,38C102,40 127,43 150,45C173,47 200,47 220,48C240,49 255,50 270,52C285,54 297,56 310,62C323,68 335,76 350,85C365,94 383,104 400,115C417,126 433,137 450,150C467,163 482,179 500,195C518,211 540,228 560,245C580,262 600,282 620,300C640,318 663,336 680,350C697,364 708,375 720,385C732,395 741,401 750,410C759,419 767,428 775,440C783,452 792,470 800,485C808,500 813,515 820,530C827,545 834,562 840,575C846,588 854,601 857,610C860,619 861,627 858,630C855,633 846,630 840,628C834,626 827,620 820,615C813,610 805,598 800,600C795,602 794,628 790,630C786,632 781,620 778,612C775,604 775,594 770,585C765,576 758,568 750,560C742,552 730,542 720,535C710,528 699,520 690,515C681,510 673,506 665,505C657,504 649,508 640,510C631,512 620,518 610,520C600,522 588,523 580,525C572,527 565,527 560,530C555,533 553,541 548,542C543,543 536,534 530,535C524,536 516,543 510,550C504,557 502,567 495,575C488,583 479,592 470,600C461,608 450,615 440,620C430,625 419,629 410,632C401,635 392,638 385,636C378,634 378,624 370,622C362,620 352,622 340,625C328,628 315,633 300,640C285,647 267,657 250,665C233,673 217,682 200,690C183,698 167,707 150,715C133,723 115,732 100,740C85,748 72,754 60,760C48,766 31,775 25,776C19,777 16,773 22,768C28,763 45,754 60,745C75,736 93,725 110,715C127,705 143,695 160,685C177,675 193,664 210,655C227,646 245,636 260,628C275,620 288,617 300,610C312,603 320,593 330,585C340,577 349,569 360,560C371,551 383,540 395,530C407,520 418,509 430,500C442,491 455,481 465,475C475,469 491,466 490,462C489,458 470,456 460,452C450,448 440,442 430,435C420,428 410,419 400,410C390,401 379,390 370,380C361,370 353,361 345,350C337,339 328,327 320,315C312,303 305,292 300,280C295,268 291,256 288,245C285,234 283,225 280,215C277,205 274,194 270,185C266,176 260,167 253,158C246,149 239,140 231,133C223,126 214,121 203,116C192,111 179,107 165,102C151,97 137,93 120,88C103,83 82,78 65,74C48,70 27,73 19,66C11,59 9,38 19,33Z" fill="#272521"/><path d="M300,215C306,208 323,216 340,225C357,234 380,254 400,270C420,286 440,303 460,320C480,337 500,353 520,370C540,387 560,404 580,420C600,436 630,451 640,465C650,479 647,496 640,505C633,514 613,516 600,520C587,524 573,531 560,528C547,525 532,511 520,500C508,489 500,470 490,462C480,454 470,456 460,452C450,448 440,442 430,435C420,428 410,419 400,410C390,401 379,390 370,380C361,370 353,361 345,350C337,339 327,328 320,315C313,302 305,287 302,270C299,253 294,222 300,215Z" fill="#35322a" opacity=".8"/><path d="M250,62C255,58 290,67 310,75C330,83 350,97 370,110C390,123 408,138 430,155C452,172 477,195 500,215C523,235 547,254 570,275C593,296 618,320 640,340C662,360 683,378 700,395C717,412 740,434 740,440C740,446 717,438 700,430C683,422 662,409 640,395C618,381 593,362 570,345C547,328 523,308 500,290C477,272 452,252 430,235C408,218 388,201 370,185C352,169 335,154 320,140C305,126 292,113 280,100C268,87 245,66 250,62Z" fill="#14171a" opacity=".7"/><path d="M270,52C275,51 297,56 310,62C323,68 335,76 350,85C365,94 383,104 400,115C417,126 433,137 450,150C467,163 482,179 500,195C518,211 540,228 560,245C580,262 600,282 620,300C640,318 663,336 680,350C697,364 717,379 720,385C723,391 713,392 700,385C687,378 662,357 640,340C618,323 593,304 570,285C547,266 523,244 500,225C477,206 452,187 430,170C408,153 388,138 370,125C352,112 335,100 320,90C305,80 288,74 280,68C272,62 265,53 270,52Z" fill="#2d2c28" opacity=".45"/><path d="M19,33C29,28 58,36 80,38C102,40 127,43 150,45C173,47 201,46 220,50C239,54 250,58 262,70C274,82 284,102 290,120C296,138 299,160 300,180C301,200 298,229 296,240C294,251 291,249 288,245C285,241 283,225 280,215C277,205 274,194 270,185C266,176 260,167 253,158C246,149 239,140 231,133C223,126 214,121 203,116C192,111 179,107 165,102C151,97 137,93 120,88C103,83 82,78 65,74C48,70 27,73 19,66C11,59 9,38 19,33Z" fill="#111518" opacity=".9"/><path d="M60,750C68,744 93,732 110,722C127,712 143,702 160,692C177,682 193,671 210,662C227,653 245,643 260,636C275,629 287,625 300,618C313,611 327,602 340,592C353,582 367,571 380,560C393,549 408,535 420,525C432,515 447,499 450,500C453,501 448,518 440,530C432,542 413,558 400,570C387,582 373,596 360,605C347,614 335,618 320,625C305,632 288,637 270,645C252,653 230,662 210,672C190,682 168,693 150,703C132,713 115,721 100,730C85,739 69,754 62,757C55,760 52,756 60,750Z" fill="#35322a" opacity=".7"/><path d="M470,540C478,540 496,553 500,560C504,567 500,573 495,580C490,587 479,595 470,602C461,609 450,615 440,620C430,625 419,629 410,632C401,635 392,637 385,636C378,635 368,629 370,624C372,619 390,612 400,605C410,598 422,588 430,580C438,572 443,565 450,558C457,551 462,540 470,540Z" fill="#14171a" opacity=".8"/><path d="M600,380C608,375 640,390 660,400C680,410 702,423 720,440C738,457 755,480 770,500C785,520 798,542 810,560C822,578 842,606 840,610C838,614 813,596 800,585C787,574 773,558 760,545C747,532 733,519 720,510C707,501 693,497 680,490C667,483 652,480 640,470C628,460 617,445 610,430C603,415 592,385 600,380Z" fill="#3b3a35" opacity=".22"/><path d="M770,520C778,512 791,496 800,500C809,504 818,531 825,545C832,559 840,574 845,585C850,596 856,604 858,612C860,620 861,628 858,631C855,634 846,631 840,628C834,625 827,620 820,615C813,610 805,598 800,600C795,602 794,628 790,630C786,632 782,620 778,612C774,604 772,590 768,580C764,570 755,560 755,550C755,540 762,528 770,520Z" fill="#0d1115" opacity=".85"/><path d="M757,348C762,344 780,334 790,330C800,326 813,321 818,321C823,321 825,325 821,328C817,331 805,335 795,339C785,343 767,352 761,353C755,354 752,352 757,348Z" fill="#0d1115" opacity=".7"/></g>
</svg>
<svg x="463.80" y="29.3" width="154.60" height="153.2" viewBox="18.8 -241.5 1318 1315.5" preserveAspectRatio="none">
<g filter="url(#pb)" opacity="1"><path d="M19,33C29,28 58,36 80,38C102,40 127,43 150,45C173,47 200,47 220,48C240,49 255,50 270,52C285,54 297,56 310,62C323,68 335,76 350,85C365,94 383,104 400,115C417,126 433,137 450,150C467,163 482,179 500,195C518,211 540,228 560,245C580,262 600,282 620,300C640,318 663,336 680,350C697,364 708,375 720,385C732,395 741,401 750,410C759,419 767,428 775,440C783,452 792,470 800,485C808,500 813,515 820,530C827,545 834,562 840,575C846,588 854,601 857,610C860,619 861,627 858,630C855,633 846,630 840,628C834,626 827,620 820,615C813,610 805,598 800,600C795,602 794,628 790,630C786,632 781,620 778,612C775,604 775,594 770,585C765,576 758,568 750,560C742,552 730,542 720,535C710,528 699,520 690,515C681,510 673,506 665,505C657,504 649,508 640,510C631,512 620,518 610,520C600,522 588,523 580,525C572,527 565,527 560,530C555,533 553,541 548,542C543,543 536,534 530,535C524,536 516,543 510,550C504,557 502,567 495,575C488,583 479,592 470,600C461,608 450,615 440,620C430,625 419,629 410,632C401,635 392,638 385,636C378,634 378,624 370,622C362,620 352,622 340,625C328,628 315,633 300,640C285,647 267,657 250,665C233,673 217,682 200,690C183,698 167,707 150,715C133,723 115,732 100,740C85,748 72,754 60,760C48,766 31,775 25,776C19,777 16,773 22,768C28,763 45,754 60,745C75,736 93,725 110,715C127,705 143,695 160,685C177,675 193,664 210,655C227,646 245,636 260,628C275,620 288,617 300,610C312,603 320,593 330,585C340,577 349,569 360,560C371,551 383,540 395,530C407,520 418,509 430,500C442,491 455,481 465,475C475,469 491,466 490,462C489,458 470,456 460,452C450,448 440,442 430,435C420,428 410,419 400,410C390,401 379,390 370,380C361,370 353,361 345,350C337,339 328,327 320,315C312,303 305,292 300,280C295,268 291,256 288,245C285,234 283,225 280,215C277,205 274,194 270,185C266,176 260,167 253,158C246,149 239,140 231,133C223,126 214,121 203,116C192,111 179,107 165,102C151,97 137,93 120,88C103,83 82,78 65,74C48,70 27,73 19,66C11,59 9,38 19,33Z" fill="#272521"/><path d="M300,215C306,208 323,216 340,225C357,234 380,254 400,270C420,286 440,303 460,320C480,337 500,353 520,370C540,387 560,404 580,420C600,436 630,451 640,465C650,479 647,496 640,505C633,514 613,516 600,520C587,524 573,531 560,528C547,525 532,511 520,500C508,489 500,470 490,462C480,454 470,456 460,452C450,448 440,442 430,435C420,428 410,419 400,410C390,401 379,390 370,380C361,370 353,361 345,350C337,339 327,328 320,315C313,302 305,287 302,270C299,253 294,222 300,215Z" fill="#35322a" opacity=".8"/><path d="M250,62C255,58 290,67 310,75C330,83 350,97 370,110C390,123 408,138 430,155C452,172 477,195 500,215C523,235 547,254 570,275C593,296 618,320 640,340C662,360 683,378 700,395C717,412 740,434 740,440C740,446 717,438 700,430C683,422 662,409 640,395C618,381 593,362 570,345C547,328 523,308 500,290C477,272 452,252 430,235C408,218 388,201 370,185C352,169 335,154 320,140C305,126 292,113 280,100C268,87 245,66 250,62Z" fill="#14171a" opacity=".7"/><path d="M270,52C275,51 297,56 310,62C323,68 335,76 350,85C365,94 383,104 400,115C417,126 433,137 450,150C467,163 482,179 500,195C518,211 540,228 560,245C580,262 600,282 620,300C640,318 663,336 680,350C697,364 717,379 720,385C723,391 713,392 700,385C687,378 662,357 640,340C618,323 593,304 570,285C547,266 523,244 500,225C477,206 452,187 430,170C408,153 388,138 370,125C352,112 335,100 320,90C305,80 288,74 280,68C272,62 265,53 270,52Z" fill="#2d2c28" opacity=".45"/><path d="M19,33C29,28 58,36 80,38C102,40 127,43 150,45C173,47 201,46 220,50C239,54 250,58 262,70C274,82 284,102 290,120C296,138 299,160 300,180C301,200 298,229 296,240C294,251 291,249 288,245C285,241 283,225 280,215C277,205 274,194 270,185C266,176 260,167 253,158C246,149 239,140 231,133C223,126 214,121 203,116C192,111 179,107 165,102C151,97 137,93 120,88C103,83 82,78 65,74C48,70 27,73 19,66C11,59 9,38 19,33Z" fill="#111518" opacity=".9"/><path d="M60,750C68,744 93,732 110,722C127,712 143,702 160,692C177,682 193,671 210,662C227,653 245,643 260,636C275,629 287,625 300,618C313,611 327,602 340,592C353,582 367,571 380,560C393,549 408,535 420,525C432,515 447,499 450,500C453,501 448,518 440,530C432,542 413,558 400,570C387,582 373,596 360,605C347,614 335,618 320,625C305,632 288,637 270,645C252,653 230,662 210,672C190,682 168,693 150,703C132,713 115,721 100,730C85,739 69,754 62,757C55,760 52,756 60,750Z" fill="#35322a" opacity=".7"/><path d="M470,540C478,540 496,553 500,560C504,567 500,573 495,580C490,587 479,595 470,602C461,609 450,615 440,620C430,625 419,629 410,632C401,635 392,637 385,636C378,635 368,629 370,624C372,619 390,612 400,605C410,598 422,588 430,580C438,572 443,565 450,558C457,551 462,540 470,540Z" fill="#14171a" opacity=".8"/><path d="M600,380C608,375 640,390 660,400C680,410 702,423 720,440C738,457 755,480 770,500C785,520 798,542 810,560C822,578 842,606 840,610C838,614 813,596 800,585C787,574 773,558 760,545C747,532 733,519 720,510C707,501 693,497 680,490C667,483 652,480 640,470C628,460 617,445 610,430C603,415 592,385 600,380Z" fill="#3b3a35" opacity=".22"/><path d="M770,520C778,512 791,496 800,500C809,504 818,531 825,545C832,559 840,574 845,585C850,596 856,604 858,612C860,620 861,628 858,631C855,634 846,631 840,628C834,625 827,620 820,615C813,610 805,598 800,600C795,602 794,628 790,630C786,632 782,620 778,612C774,604 772,590 768,580C764,570 755,560 755,550C755,540 762,528 770,520Z" fill="#0d1115" opacity=".85"/><path d="M757,348C762,344 780,334 790,330C800,326 813,321 818,321C823,321 825,325 821,328C817,331 805,335 795,339C785,343 767,352 761,353C755,354 752,352 757,348Z" fill="#0d1115" opacity=".7"/></g>
</svg>
<svg x="618.40" y="29.3" width="154.60" height="153.2" viewBox="18.8 -241.5 1318 1315.5" preserveAspectRatio="none">
<g filter="url(#pb)" opacity="1"><path d="M19,33C29,28 58,36 80,38C102,40 127,43 150,45C173,47 200,47 220,48C240,49 255,50 270,52C285,54 297,56 310,62C323,68 335,76 350,85C365,94 383,104 400,115C417,126 433,137 450,150C467,163 482,179 500,195C518,211 540,228 560,245C580,262 600,282 620,300C640,318 663,336 680,350C697,364 708,375 720,385C732,395 741,401 750,410C759,419 767,428 775,440C783,452 792,470 800,485C808,500 813,515 820,530C827,545 834,562 840,575C846,588 854,601 857,610C860,619 861,627 858,630C855,633 846,630 840,628C834,626 827,620 820,615C813,610 805,598 800,600C795,602 794,628 790,630C786,632 781,620 778,612C775,604 775,594 770,585C765,576 758,568 750,560C742,552 730,542 720,535C710,528 699,520 690,515C681,510 673,506 665,505C657,504 649,508 640,510C631,512 620,518 610,520C600,522 588,523 580,525C572,527 565,527 560,530C555,533 553,541 548,542C543,543 536,534 530,535C524,536 516,543 510,550C504,557 502,567 495,575C488,583 479,592 470,600C461,608 450,615 440,620C430,625 419,629 410,632C401,635 392,638 385,636C378,634 378,624 370,622C362,620 352,622 340,625C328,628 315,633 300,640C285,647 267,657 250,665C233,673 217,682 200,690C183,698 167,707 150,715C133,723 115,732 100,740C85,748 72,754 60,760C48,766 31,775 25,776C19,777 16,773 22,768C28,763 45,754 60,745C75,736 93,725 110,715C127,705 143,695 160,685C177,675 193,664 210,655C227,646 245,636 260,628C275,620 288,617 300,610C312,603 320,593 330,585C340,577 349,569 360,560C371,551 383,540 395,530C407,520 418,509 430,500C442,491 455,481 465,475C475,469 491,466 490,462C489,458 470,456 460,452C450,448 440,442 430,435C420,428 410,419 400,410C390,401 379,390 370,380C361,370 353,361 345,350C337,339 328,327 320,315C312,303 305,292 300,280C295,268 291,256 288,245C285,234 283,225 280,215C277,205 274,194 270,185C266,176 260,167 253,158C246,149 239,140 231,133C223,126 214,121 203,116C192,111 179,107 165,102C151,97 137,93 120,88C103,83 82,78 65,74C48,70 27,73 19,66C11,59 9,38 19,33Z" fill="#272521"/><path d="M300,215C306,208 323,216 340,225C357,234 380,254 400,270C420,286 440,303 460,320C480,337 500,353 520,370C540,387 560,404 580,420C600,436 630,451 640,465C650,479 647,496 640,505C633,514 613,516 600,520C587,524 573,531 560,528C547,525 532,511 520,500C508,489 500,470 490,462C480,454 470,456 460,452C450,448 440,442 430,435C420,428 410,419 400,410C390,401 379,390 370,380C361,370 353,361 345,350C337,339 327,328 320,315C313,302 305,287 302,270C299,253 294,222 300,215Z" fill="#35322a" opacity=".8"/><path d="M250,62C255,58 290,67 310,75C330,83 350,97 370,110C390,123 408,138 430,155C452,172 477,195 500,215C523,235 547,254 570,275C593,296 618,320 640,340C662,360 683,378 700,395C717,412 740,434 740,440C740,446 717,438 700,430C683,422 662,409 640,395C618,381 593,362 570,345C547,328 523,308 500,290C477,272 452,252 430,235C408,218 388,201 370,185C352,169 335,154 320,140C305,126 292,113 280,100C268,87 245,66 250,62Z" fill="#14171a" opacity=".7"/><path d="M270,52C275,51 297,56 310,62C323,68 335,76 350,85C365,94 383,104 400,115C417,126 433,137 450,150C467,163 482,179 500,195C518,211 540,228 560,245C580,262 600,282 620,300C640,318 663,336 680,350C697,364 717,379 720,385C723,391 713,392 700,385C687,378 662,357 640,340C618,323 593,304 570,285C547,266 523,244 500,225C477,206 452,187 430,170C408,153 388,138 370,125C352,112 335,100 320,90C305,80 288,74 280,68C272,62 265,53 270,52Z" fill="#2d2c28" opacity=".45"/><path d="M19,33C29,28 58,36 80,38C102,40 127,43 150,45C173,47 201,46 220,50C239,54 250,58 262,70C274,82 284,102 290,120C296,138 299,160 300,180C301,200 298,229 296,240C294,251 291,249 288,245C285,241 283,225 280,215C277,205 274,194 270,185C266,176 260,167 253,158C246,149 239,140 231,133C223,126 214,121 203,116C192,111 179,107 165,102C151,97 137,93 120,88C103,83 82,78 65,74C48,70 27,73 19,66C11,59 9,38 19,33Z" fill="#111518" opacity=".9"/><path d="M60,750C68,744 93,732 110,722C127,712 143,702 160,692C177,682 193,671 210,662C227,653 245,643 260,636C275,629 287,625 300,618C313,611 327,602 340,592C353,582 367,571 380,560C393,549 408,535 420,525C432,515 447,499 450,500C453,501 448,518 440,530C432,542 413,558 400,570C387,582 373,596 360,605C347,614 335,618 320,625C305,632 288,637 270,645C252,653 230,662 210,672C190,682 168,693 150,703C132,713 115,721 100,730C85,739 69,754 62,757C55,760 52,756 60,750Z" fill="#35322a" opacity=".7"/><path d="M470,540C478,540 496,553 500,560C504,567 500,573 495,580C490,587 479,595 470,602C461,609 450,615 440,620C430,625 419,629 410,632C401,635 392,637 385,636C378,635 368,629 370,624C372,619 390,612 400,605C410,598 422,588 430,580C438,572 443,565 450,558C457,551 462,540 470,540Z" fill="#14171a" opacity=".8"/><path d="M600,380C608,375 640,390 660,400C680,410 702,423 720,440C738,457 755,480 770,500C785,520 798,542 810,560C822,578 842,606 840,610C838,614 813,596 800,585C787,574 773,558 760,545C747,532 733,519 720,510C707,501 693,497 680,490C667,483 652,480 640,470C628,460 617,445 610,430C603,415 592,385 600,380Z" fill="#3b3a35" opacity=".22"/><path d="M770,520C778,512 791,496 800,500C809,504 818,531 825,545C832,559 840,574 845,585C850,596 856,604 858,612C860,620 861,628 858,631C855,634 846,631 840,628C834,625 827,620 820,615C813,610 805,598 800,600C795,602 794,628 790,630C786,632 782,620 778,612C774,604 772,590 768,580C764,570 755,560 755,550C755,540 762,528 770,520Z" fill="#0d1115" opacity=".85"/><path d="M757,348C762,344 780,334 790,330C800,326 813,321 818,321C823,321 825,325 821,328C817,331 805,335 795,339C785,343 767,352 761,353C755,354 752,352 757,348Z" fill="#0d1115" opacity=".7"/></g>
</svg>
<svg x="154.60" y="29.3" width="154.60" height="153.2"><ellipse cx="94.0" cy="96.5" rx="26" ry="26" transform="rotate(0 94.0 96.5)" fill="url(#g1)" opacity="1"/></svg>
<svg x="463.80" y="29.3" width="154.60" height="153.2"><ellipse cx="44.0" cy="66.0" rx="62" ry="27" transform="rotate(42 44.0 66.0)" fill="url(#g2)" opacity="1"/></svg>
<svg x="618.40" y="29.3" width="154.60" height="153.2"><ellipse cx="57.0" cy="62.0" rx="70" ry="33" transform="rotate(40 57.0 62.0)" fill="url(#g3)" opacity="1"/></svg>
<svg x="154.60" y="29.3" width="154.60" height="153.2" viewBox="18.8 -241.5 1318 1315.5" preserveAspectRatio="none">
<g filter="url(#pb)" opacity="0.32"><path d="M19,33C29,28 58,36 80,38C102,40 127,43 150,45C173,47 200,47 220,48C240,49 255,50 270,52C285,54 297,56 310,62C323,68 335,76 350,85C365,94 383,104 400,115C417,126 433,137 450,150C467,163 482,179 500,195C518,211 540,228 560,245C580,262 600,282 620,300C640,318 663,336 680,350C697,364 708,375 720,385C732,395 741,401 750,410C759,419 767,428 775,440C783,452 792,470 800,485C808,500 813,515 820,530C827,545 834,562 840,575C846,588 854,601 857,610C860,619 861,627 858,630C855,633 846,630 840,628C834,626 827,620 820,615C813,610 805,598 800,600C795,602 794,628 790,630C786,632 781,620 778,612C775,604 775,594 770,585C765,576 758,568 750,560C742,552 730,542 720,535C710,528 699,520 690,515C681,510 673,506 665,505C657,504 649,508 640,510C631,512 620,518 610,520C600,522 588,523 580,525C572,527 565,527 560,530C555,533 553,541 548,542C543,543 536,534 530,535C524,536 516,543 510,550C504,557 502,567 495,575C488,583 479,592 470,600C461,608 450,615 440,620C430,625 419,629 410,632C401,635 392,638 385,636C378,634 378,624 370,622C362,620 352,622 340,625C328,628 315,633 300,640C285,647 267,657 250,665C233,673 217,682 200,690C183,698 167,707 150,715C133,723 115,732 100,740C85,748 72,754 60,760C48,766 31,775 25,776C19,777 16,773 22,768C28,763 45,754 60,745C75,736 93,725 110,715C127,705 143,695 160,685C177,675 193,664 210,655C227,646 245,636 260,628C275,620 288,617 300,610C312,603 320,593 330,585C340,577 349,569 360,560C371,551 383,540 395,530C407,520 418,509 430,500C442,491 455,481 465,475C475,469 491,466 490,462C489,458 470,456 460,452C450,448 440,442 430,435C420,428 410,419 400,410C390,401 379,390 370,380C361,370 353,361 345,350C337,339 328,327 320,315C312,303 305,292 300,280C295,268 291,256 288,245C285,234 283,225 280,215C277,205 274,194 270,185C266,176 260,167 253,158C246,149 239,140 231,133C223,126 214,121 203,116C192,111 179,107 165,102C151,97 137,93 120,88C103,83 82,78 65,74C48,70 27,73 19,66C11,59 9,38 19,33Z" fill="#272521"/><path d="M300,215C306,208 323,216 340,225C357,234 380,254 400,270C420,286 440,303 460,320C480,337 500,353 520,370C540,387 560,404 580,420C600,436 630,451 640,465C650,479 647,496 640,505C633,514 613,516 600,520C587,524 573,531 560,528C547,525 532,511 520,500C508,489 500,470 490,462C480,454 470,456 460,452C450,448 440,442 430,435C420,428 410,419 400,410C390,401 379,390 370,380C361,370 353,361 345,350C337,339 327,328 320,315C313,302 305,287 302,270C299,253 294,222 300,215Z" fill="#35322a" opacity=".8"/><path d="M250,62C255,58 290,67 310,75C330,83 350,97 370,110C390,123 408,138 430,155C452,172 477,195 500,215C523,235 547,254 570,275C593,296 618,320 640,340C662,360 683,378 700,395C717,412 740,434 740,440C740,446 717,438 700,430C683,422 662,409 640,395C618,381 593,362 570,345C547,328 523,308 500,290C477,272 452,252 430,235C408,218 388,201 370,185C352,169 335,154 320,140C305,126 292,113 280,100C268,87 245,66 250,62Z" fill="#14171a" opacity=".7"/><path d="M270,52C275,51 297,56 310,62C323,68 335,76 350,85C365,94 383,104 400,115C417,126 433,137 450,150C467,163 482,179 500,195C518,211 540,228 560,245C580,262 600,282 620,300C640,318 663,336 680,350C697,364 717,379 720,385C723,391 713,392 700,385C687,378 662,357 640,340C618,323 593,304 570,285C547,266 523,244 500,225C477,206 452,187 430,170C408,153 388,138 370,125C352,112 335,100 320,90C305,80 288,74 280,68C272,62 265,53 270,52Z" fill="#2d2c28" opacity=".45"/><path d="M19,33C29,28 58,36 80,38C102,40 127,43 150,45C173,47 201,46 220,50C239,54 250,58 262,70C274,82 284,102 290,120C296,138 299,160 300,180C301,200 298,229 296,240C294,251 291,249 288,245C285,241 283,225 280,215C277,205 274,194 270,185C266,176 260,167 253,158C246,149 239,140 231,133C223,126 214,121 203,116C192,111 179,107 165,102C151,97 137,93 120,88C103,83 82,78 65,74C48,70 27,73 19,66C11,59 9,38 19,33Z" fill="#111518" opacity=".9"/><path d="M60,750C68,744 93,732 110,722C127,712 143,702 160,692C177,682 193,671 210,662C227,653 245,643 260,636C275,629 287,625 300,618C313,611 327,602 340,592C353,582 367,571 380,560C393,549 408,535 420,525C432,515 447,499 450,500C453,501 448,518 440,530C432,542 413,558 400,570C387,582 373,596 360,605C347,614 335,618 320,625C305,632 288,637 270,645C252,653 230,662 210,672C190,682 168,693 150,703C132,713 115,721 100,730C85,739 69,754 62,757C55,760 52,756 60,750Z" fill="#35322a" opacity=".7"/><path d="M470,540C478,540 496,553 500,560C504,567 500,573 495,580C490,587 479,595 470,602C461,609 450,615 440,620C430,625 419,629 410,632C401,635 392,637 385,636C378,635 368,629 370,624C372,619 390,612 400,605C410,598 422,588 430,580C438,572 443,565 450,558C457,551 462,540 470,540Z" fill="#14171a" opacity=".8"/><path d="M600,380C608,375 640,390 660,400C680,410 702,423 720,440C738,457 755,480 770,500C785,520 798,542 810,560C822,578 842,606 840,610C838,614 813,596 800,585C787,574 773,558 760,545C747,532 733,519 720,510C707,501 693,497 680,490C667,483 652,480 640,470C628,460 617,445 610,430C603,415 592,385 600,380Z" fill="#3b3a35" opacity=".22"/><path d="M770,520C778,512 791,496 800,500C809,504 818,531 825,545C832,559 840,574 845,585C850,596 856,604 858,612C860,620 861,628 858,631C855,634 846,631 840,628C834,625 827,620 820,615C813,610 805,598 800,600C795,602 794,628 790,630C786,632 782,620 778,612C774,604 772,590 768,580C764,570 755,560 755,550C755,540 762,528 770,520Z" fill="#0d1115" opacity=".85"/><path d="M757,348C762,344 780,334 790,330C800,326 813,321 818,321C823,321 825,325 821,328C817,331 805,335 795,339C785,343 767,352 761,353C755,354 752,352 757,348Z" fill="#0d1115" opacity=".7"/></g>
</svg>
<svg x="463.80" y="29.3" width="154.60" height="153.2" viewBox="18.8 -241.5 1318 1315.5" preserveAspectRatio="none">
<g filter="url(#pb)" opacity="0.3"><path d="M19,33C29,28 58,36 80,38C102,40 127,43 150,45C173,47 200,47 220,48C240,49 255,50 270,52C285,54 297,56 310,62C323,68 335,76 350,85C365,94 383,104 400,115C417,126 433,137 450,150C467,163 482,179 500,195C518,211 540,228 560,245C580,262 600,282 620,300C640,318 663,336 680,350C697,364 708,375 720,385C732,395 741,401 750,410C759,419 767,428 775,440C783,452 792,470 800,485C808,500 813,515 820,530C827,545 834,562 840,575C846,588 854,601 857,610C860,619 861,627 858,630C855,633 846,630 840,628C834,626 827,620 820,615C813,610 805,598 800,600C795,602 794,628 790,630C786,632 781,620 778,612C775,604 775,594 770,585C765,576 758,568 750,560C742,552 730,542 720,535C710,528 699,520 690,515C681,510 673,506 665,505C657,504 649,508 640,510C631,512 620,518 610,520C600,522 588,523 580,525C572,527 565,527 560,530C555,533 553,541 548,542C543,543 536,534 530,535C524,536 516,543 510,550C504,557 502,567 495,575C488,583 479,592 470,600C461,608 450,615 440,620C430,625 419,629 410,632C401,635 392,638 385,636C378,634 378,624 370,622C362,620 352,622 340,625C328,628 315,633 300,640C285,647 267,657 250,665C233,673 217,682 200,690C183,698 167,707 150,715C133,723 115,732 100,740C85,748 72,754 60,760C48,766 31,775 25,776C19,777 16,773 22,768C28,763 45,754 60,745C75,736 93,725 110,715C127,705 143,695 160,685C177,675 193,664 210,655C227,646 245,636 260,628C275,620 288,617 300,610C312,603 320,593 330,585C340,577 349,569 360,560C371,551 383,540 395,530C407,520 418,509 430,500C442,491 455,481 465,475C475,469 491,466 490,462C489,458 470,456 460,452C450,448 440,442 430,435C420,428 410,419 400,410C390,401 379,390 370,380C361,370 353,361 345,350C337,339 328,327 320,315C312,303 305,292 300,280C295,268 291,256 288,245C285,234 283,225 280,215C277,205 274,194 270,185C266,176 260,167 253,158C246,149 239,140 231,133C223,126 214,121 203,116C192,111 179,107 165,102C151,97 137,93 120,88C103,83 82,78 65,74C48,70 27,73 19,66C11,59 9,38 19,33Z" fill="#272521"/><path d="M300,215C306,208 323,216 340,225C357,234 380,254 400,270C420,286 440,303 460,320C480,337 500,353 520,370C540,387 560,404 580,420C600,436 630,451 640,465C650,479 647,496 640,505C633,514 613,516 600,520C587,524 573,531 560,528C547,525 532,511 520,500C508,489 500,470 490,462C480,454 470,456 460,452C450,448 440,442 430,435C420,428 410,419 400,410C390,401 379,390 370,380C361,370 353,361 345,350C337,339 327,328 320,315C313,302 305,287 302,270C299,253 294,222 300,215Z" fill="#35322a" opacity=".8"/><path d="M250,62C255,58 290,67 310,75C330,83 350,97 370,110C390,123 408,138 430,155C452,172 477,195 500,215C523,235 547,254 570,275C593,296 618,320 640,340C662,360 683,378 700,395C717,412 740,434 740,440C740,446 717,438 700,430C683,422 662,409 640,395C618,381 593,362 570,345C547,328 523,308 500,290C477,272 452,252 430,235C408,218 388,201 370,185C352,169 335,154 320,140C305,126 292,113 280,100C268,87 245,66 250,62Z" fill="#14171a" opacity=".7"/><path d="M270,52C275,51 297,56 310,62C323,68 335,76 350,85C365,94 383,104 400,115C417,126 433,137 450,150C467,163 482,179 500,195C518,211 540,228 560,245C580,262 600,282 620,300C640,318 663,336 680,350C697,364 717,379 720,385C723,391 713,392 700,385C687,378 662,357 640,340C618,323 593,304 570,285C547,266 523,244 500,225C477,206 452,187 430,170C408,153 388,138 370,125C352,112 335,100 320,90C305,80 288,74 280,68C272,62 265,53 270,52Z" fill="#2d2c28" opacity=".45"/><path d="M19,33C29,28 58,36 80,38C102,40 127,43 150,45C173,47 201,46 220,50C239,54 250,58 262,70C274,82 284,102 290,120C296,138 299,160 300,180C301,200 298,229 296,240C294,251 291,249 288,245C285,241 283,225 280,215C277,205 274,194 270,185C266,176 260,167 253,158C246,149 239,140 231,133C223,126 214,121 203,116C192,111 179,107 165,102C151,97 137,93 120,88C103,83 82,78 65,74C48,70 27,73 19,66C11,59 9,38 19,33Z" fill="#111518" opacity=".9"/><path d="M60,750C68,744 93,732 110,722C127,712 143,702 160,692C177,682 193,671 210,662C227,653 245,643 260,636C275,629 287,625 300,618C313,611 327,602 340,592C353,582 367,571 380,560C393,549 408,535 420,525C432,515 447,499 450,500C453,501 448,518 440,530C432,542 413,558 400,570C387,582 373,596 360,605C347,614 335,618 320,625C305,632 288,637 270,645C252,653 230,662 210,672C190,682 168,693 150,703C132,713 115,721 100,730C85,739 69,754 62,757C55,760 52,756 60,750Z" fill="#35322a" opacity=".7"/><path d="M470,540C478,540 496,553 500,560C504,567 500,573 495,580C490,587 479,595 470,602C461,609 450,615 440,620C430,625 419,629 410,632C401,635 392,637 385,636C378,635 368,629 370,624C372,619 390,612 400,605C410,598 422,588 430,580C438,572 443,565 450,558C457,551 462,540 470,540Z" fill="#14171a" opacity=".8"/><path d="M600,380C608,375 640,390 660,400C680,410 702,423 720,440C738,457 755,480 770,500C785,520 798,542 810,560C822,578 842,606 840,610C838,614 813,596 800,585C787,574 773,558 760,545C747,532 733,519 720,510C707,501 693,497 680,490C667,483 652,480 640,470C628,460 617,445 610,430C603,415 592,385 600,380Z" fill="#3b3a35" opacity=".22"/><path d="M770,520C778,512 791,496 800,500C809,504 818,531 825,545C832,559 840,574 845,585C850,596 856,604 858,612C860,620 861,628 858,631C855,634 846,631 840,628C834,625 827,620 820,615C813,610 805,598 800,600C795,602 794,628 790,630C786,632 782,620 778,612C774,604 772,590 768,580C764,570 755,560 755,550C755,540 762,528 770,520Z" fill="#0d1115" opacity=".85"/><path d="M757,348C762,344 780,334 790,330C800,326 813,321 818,321C823,321 825,325 821,328C817,331 805,335 795,339C785,343 767,352 761,353C755,354 752,352 757,348Z" fill="#0d1115" opacity=".7"/></g>
</svg>
<svg x="618.40" y="29.3" width="154.60" height="153.2" viewBox="18.8 -241.5 1318 1315.5" preserveAspectRatio="none">
<g filter="url(#pb)" opacity="0.22"><path d="M19,33C29,28 58,36 80,38C102,40 127,43 150,45C173,47 200,47 220,48C240,49 255,50 270,52C285,54 297,56 310,62C323,68 335,76 350,85C365,94 383,104 400,115C417,126 433,137 450,150C467,163 482,179 500,195C518,211 540,228 560,245C580,262 600,282 620,300C640,318 663,336 680,350C697,364 708,375 720,385C732,395 741,401 750,410C759,419 767,428 775,440C783,452 792,470 800,485C808,500 813,515 820,530C827,545 834,562 840,575C846,588 854,601 857,610C860,619 861,627 858,630C855,633 846,630 840,628C834,626 827,620 820,615C813,610 805,598 800,600C795,602 794,628 790,630C786,632 781,620 778,612C775,604 775,594 770,585C765,576 758,568 750,560C742,552 730,542 720,535C710,528 699,520 690,515C681,510 673,506 665,505C657,504 649,508 640,510C631,512 620,518 610,520C600,522 588,523 580,525C572,527 565,527 560,530C555,533 553,541 548,542C543,543 536,534 530,535C524,536 516,543 510,550C504,557 502,567 495,575C488,583 479,592 470,600C461,608 450,615 440,620C430,625 419,629 410,632C401,635 392,638 385,636C378,634 378,624 370,622C362,620 352,622 340,625C328,628 315,633 300,640C285,647 267,657 250,665C233,673 217,682 200,690C183,698 167,707 150,715C133,723 115,732 100,740C85,748 72,754 60,760C48,766 31,775 25,776C19,777 16,773 22,768C28,763 45,754 60,745C75,736 93,725 110,715C127,705 143,695 160,685C177,675 193,664 210,655C227,646 245,636 260,628C275,620 288,617 300,610C312,603 320,593 330,585C340,577 349,569 360,560C371,551 383,540 395,530C407,520 418,509 430,500C442,491 455,481 465,475C475,469 491,466 490,462C489,458 470,456 460,452C450,448 440,442 430,435C420,428 410,419 400,410C390,401 379,390 370,380C361,370 353,361 345,350C337,339 328,327 320,315C312,303 305,292 300,280C295,268 291,256 288,245C285,234 283,225 280,215C277,205 274,194 270,185C266,176 260,167 253,158C246,149 239,140 231,133C223,126 214,121 203,116C192,111 179,107 165,102C151,97 137,93 120,88C103,83 82,78 65,74C48,70 27,73 19,66C11,59 9,38 19,33Z" fill="#272521"/><path d="M300,215C306,208 323,216 340,225C357,234 380,254 400,270C420,286 440,303 460,320C480,337 500,353 520,370C540,387 560,404 580,420C600,436 630,451 640,465C650,479 647,496 640,505C633,514 613,516 600,520C587,524 573,531 560,528C547,525 532,511 520,500C508,489 500,470 490,462C480,454 470,456 460,452C450,448 440,442 430,435C420,428 410,419 400,410C390,401 379,390 370,380C361,370 353,361 345,350C337,339 327,328 320,315C313,302 305,287 302,270C299,253 294,222 300,215Z" fill="#35322a" opacity=".8"/><path d="M250,62C255,58 290,67 310,75C330,83 350,97 370,110C390,123 408,138 430,155C452,172 477,195 500,215C523,235 547,254 570,275C593,296 618,320 640,340C662,360 683,378 700,395C717,412 740,434 740,440C740,446 717,438 700,430C683,422 662,409 640,395C618,381 593,362 570,345C547,328 523,308 500,290C477,272 452,252 430,235C408,218 388,201 370,185C352,169 335,154 320,140C305,126 292,113 280,100C268,87 245,66 250,62Z" fill="#14171a" opacity=".7"/><path d="M270,52C275,51 297,56 310,62C323,68 335,76 350,85C365,94 383,104 400,115C417,126 433,137 450,150C467,163 482,179 500,195C518,211 540,228 560,245C580,262 600,282 620,300C640,318 663,336 680,350C697,364 717,379 720,385C723,391 713,392 700,385C687,378 662,357 640,340C618,323 593,304 570,285C547,266 523,244 500,225C477,206 452,187 430,170C408,153 388,138 370,125C352,112 335,100 320,90C305,80 288,74 280,68C272,62 265,53 270,52Z" fill="#2d2c28" opacity=".45"/><path d="M19,33C29,28 58,36 80,38C102,40 127,43 150,45C173,47 201,46 220,50C239,54 250,58 262,70C274,82 284,102 290,120C296,138 299,160 300,180C301,200 298,229 296,240C294,251 291,249 288,245C285,241 283,225 280,215C277,205 274,194 270,185C266,176 260,167 253,158C246,149 239,140 231,133C223,126 214,121 203,116C192,111 179,107 165,102C151,97 137,93 120,88C103,83 82,78 65,74C48,70 27,73 19,66C11,59 9,38 19,33Z" fill="#111518" opacity=".9"/><path d="M60,750C68,744 93,732 110,722C127,712 143,702 160,692C177,682 193,671 210,662C227,653 245,643 260,636C275,629 287,625 300,618C313,611 327,602 340,592C353,582 367,571 380,560C393,549 408,535 420,525C432,515 447,499 450,500C453,501 448,518 440,530C432,542 413,558 400,570C387,582 373,596 360,605C347,614 335,618 320,625C305,632 288,637 270,645C252,653 230,662 210,672C190,682 168,693 150,703C132,713 115,721 100,730C85,739 69,754 62,757C55,760 52,756 60,750Z" fill="#35322a" opacity=".7"/><path d="M470,540C478,540 496,553 500,560C504,567 500,573 495,580C490,587 479,595 470,602C461,609 450,615 440,620C430,625 419,629 410,632C401,635 392,637 385,636C378,635 368,629 370,624C372,619 390,612 400,605C410,598 422,588 430,580C438,572 443,565 450,558C457,551 462,540 470,540Z" fill="#14171a" opacity=".8"/><path d="M600,380C608,375 640,390 660,400C680,410 702,423 720,440C738,457 755,480 770,500C785,520 798,542 810,560C822,578 842,606 840,610C838,614 813,596 800,585C787,574 773,558 760,545C747,532 733,519 720,510C707,501 693,497 680,490C667,483 652,480 640,470C628,460 617,445 610,430C603,415 592,385 600,380Z" fill="#3b3a35" opacity=".22"/><path d="M770,520C778,512 791,496 800,500C809,504 818,531 825,545C832,559 840,574 845,585C850,596 856,604 858,612C860,620 861,628 858,631C855,634 846,631 840,628C834,625 827,620 820,615C813,610 805,598 800,600C795,602 794,628 790,630C786,632 782,620 778,612C774,604 772,590 768,580C764,570 755,560 755,550C755,540 762,528 770,520Z" fill="#0d1115" opacity=".85"/><path d="M757,348C762,344 780,334 790,330C800,326 813,321 818,321C823,321 825,325 821,328C817,331 805,335 795,339C785,343 767,352 761,353C755,354 752,352 757,348Z" fill="#0d1115" opacity=".7"/></g>
</svg>
<rect x="154.00" y="29.3" width="1.3" height="153.2" fill="#0d1418"/>
<rect x="308.60" y="29.3" width="1.3" height="153.2" fill="#0d1418"/>
<rect x="463.20" y="29.3" width="1.3" height="153.2" fill="#0d1418"/>
<rect x="617.80" y="29.3" width="1.3" height="153.2" fill="#0d1418"/>
<text x="1.2" y="24.6" font-family="Liberation Mono, monospace" font-size="26.6" letter-spacing="2.04" fill="#dedede" xml:space="preserve">5:tail</text>
<text x="155.8" y="24.6" font-family="Liberation Mono, monospace" font-size="26.6" letter-spacing="2.04" fill="#dedede" xml:space="preserve">4:long</text>
<text x="310.4" y="24.6" font-family="Liberation Mono, monospace" font-size="26.6" letter-spacing="2.04" fill="#dedede" xml:space="preserve">3:with</text>
<text x="465.0" y="24.6" font-family="Liberation Mono, monospace" font-size="26.6" letter-spacing="2.04" fill="#dedede" xml:space="preserve">2:flying</text>
<text x="619.6" y="24.6" font-family="Liberation Mono, monospace" font-size="26.6" letter-spacing="2.04" fill="#dedede" xml:space="preserve">1:bird</text>
</svg>
  <!-- IMG-END -->
  <!-- sidebar content -->
  <svg class="abs" style="left:330px;top:159px" width="16" height="16" viewBox="0 0 16 16"><path d="M2.300 2.300l11.400 11.400M13.700 2.300L2.300 13.700" stroke="#a2a7ac" stroke-width="3" fill="none"/></svg>
  <div class="t h" id="nav" style="left:17.6px;top:273.2px;font-size:23px;letter-spacing:1.58px">Navigation</div>
  <div class="t" id="goto" style="left:18px;top:325.200px;font-size:13.500px;color:#4b4d58;transform-origin:0 0">Go To</div>
  <div class="abs" style="left:19.600px;top:355.200px;width:22.200px;height:22.200px;border-radius:50%;background:#6249e6"></div>
  <div class="abs" style="left:27.400px;top:363px;width:6.600px;height:6.600px;border-radius:50%;background:#fff"></div>
  <div class="abs" style="left:19.600px;top:383.500px;width:22.200px;height:22.200px;border-radius:50%;background:#f6f7fa;border:2px solid #a3a5ac"></div>
  <div class="t lbl" id="demo" style="left:53px;top:358.6px;transform:scaleX(.935)">Demo</div>
  <div class="t lbl" id="expl" style="left:53.5px;top:386.5px;transform:scaleX(.935)">AttnGAN Explanation</div>
  <!-- hamburger -->
  <svg class="abs" style="left:1452px;top:160px" width="18" height="16" viewBox="0 0 18 16"><path d="M1 2.400h15.200M1 8.400h15.200M1 14.200h15.200" stroke="#5b5c62" stroke-width="2.100" stroke-linecap="butt"/></svg>
  <!-- fullscreen arrows -->
  <svg class="abs" style="left:1140px;top:215px" width="19" height="18" viewBox="0 0 19 18"><path d="M1.200 1h6.200L5.300 3.100l3 3-1.900 1.900-3-3L1.200 7.200z" fill="#8b8c91"/><path d="M17.800 17h-6.200l2.100-2.100-3-3 1.900-1.900 3 3 2.200-2.200z" fill="#8b8c91"/></svg>
  <!-- visual search button -->
  <div class="abs" style="left:984px;top:213.400px;width:35px;height:35px;border-radius:50%;background:rgba(226,237,250,.7)"></div>
  <svg class="abs" style="left:991px;top:220.400px" width="21" height="21" viewBox="0 0 21 21"><path d="M1.600 7V4.600a3 3 0 0 1 3-3H7M14 1.600h2.400a3 3 0 0 1 3 3V7M19.400 14v2.400a3 3 0 0 1-3 3H14M7 19.400H4.600a3 3 0 0 1-3-3V14" stroke="#3b83d2" stroke-width="1.900" fill="none" stroke-linecap="round"/><circle cx="10.500" cy="10.800" r="2.500" fill="none" stroke="#3b83d2" stroke-width="1.700"/><circle cx="6" cy="5.800" r=".9" fill="#3b83d2"/></svg>
  <!-- scrollbar thumb -->
  <div class="abs" style="left:1493.200px;top:421.400px;width:7px;height:259.600px;border-radius:3.500px 0 0 3.500px;background:#aeaeb2"></div>
  <!-- cursors -->
  <svg class="abs" style="left:490px;top:341px" width="14" height="20" viewBox="0 0 14 20"><path d="M1.200 1.300v15.300l3.300-3.100 2.300 5.200 2.300-1-2.200-5.100 4.600-.4z" fill="#fff" stroke="#363844" stroke-width="1.150" stroke-linejoin="round"/></svg>
  <svg class="abs" style="left:829px;top:465px" width="16" height="24" viewBox="0 0 16 24"><path d="M1.500 1.500v18.100l4.100-3.700 2.900 6.200 2.600-1.200-2.800-6h5.900z" fill="#fff" stroke="#27344a" stroke-width="1.400" stroke-linejoin="round"/></svg>
  <!-- recorder overlay -->
  <div class="abs" style="left:1423.200px;top:774.200px;width:71px;height:34.700px;background:#363636"></div>
  <div class="abs" style="left:1458px;top:774.200px;width:1px;height:34.700px;background:#2c2c2c"></div>
  <div class="abs" style="left:1433px;top:785px;width:5.300px;height:15.500px;background:#b1b1b1"></div>
  <div class="abs" style="left:1442.900px;top:785px;width:5.300px;height:15.500px;background:#b1b1b1"></div>
  <svg class="abs" style="left:1465px;top:784px" width="23" height="18" viewBox="0 0 23 18"><rect x="1.500" y="1.500" width="20" height="14.800" fill="none" stroke="#a9a9a9" stroke-width="1.100"/><path d="M5 16.300c0-3 2.200-3.400 4.300-4.100.9-.3 1-1.200.6-2-.8-1.500-.7-5.200 1.600-5.200s2.400 3.700 1.600 5.200c-.4.800-.3 1.700.6 2 2.100.7 4.300 1.100 4.300 4.100z" fill="#a9a9a9"/></svg>
  <div class="abs" id="deco"></div>
  <div class="abs" id="bottomstrip"><div class="t" style="left:1376px;top:3.600px;font-size:11px;color:#111;letter-spacing:1px">11:23 AM</div><div class="abs" style="left:1495px;top:1px;width:1px;height:6px;background:#a9b0b8"></div></div>
  <div class="abs" id="blackbot"></div>
</div>
</body>
</html>
